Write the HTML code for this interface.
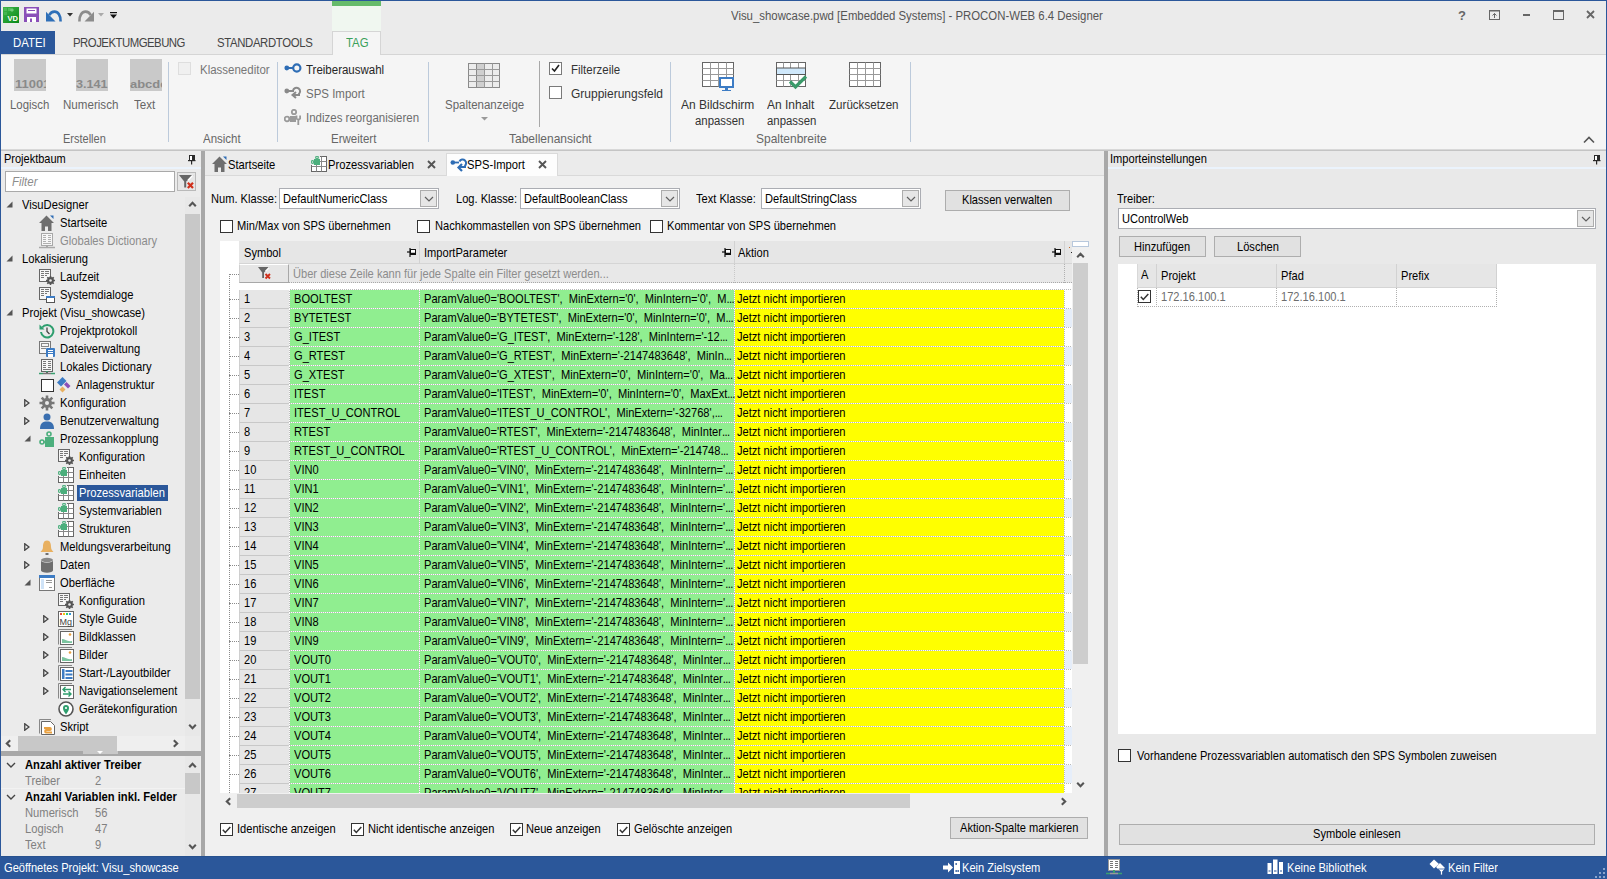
<!DOCTYPE html>
<html><head><meta charset="utf-8">
<style>
*{margin:0;padding:0;box-sizing:border-box}
html,body{width:1607px;height:879px;overflow:hidden;background:#ebebeb;font-family:"Liberation Sans",sans-serif;font-size:11.88px;color:#000}
.a{position:absolute}
.t{position:absolute;white-space:nowrap;line-height:1;transform:scaleX(0.9259);transform-origin:0 0}
#win{position:absolute;left:0;top:0;width:1607px;height:879px;border:1px solid #2b579a;border-bottom:none}
</style></head><body>
<!-- title bar -->
<div class="a" style="left:0;top:0;width:1607px;height:30px;background:#ebebeb"></div>
<!-- tab row -->
<div class="a" style="left:1px;top:31px;width:54px;height:24px;background:#2b579a"></div>
<!-- ribbon -->
<div class="a" style="left:1px;top:54px;width:1605px;height:97px;background:#f5f5f5;border-top:1px solid #d5d5d5;border-bottom:1px solid #c4c4c4"></div>
<div class="a" style="left:1px;top:149px;width:1605px;height:1px;background:#d8d8d8"></div>
<!-- main area -->
<div class="a" style="left:1px;top:151px;width:1605px;height:705px;background:#ebebeb"></div>
<!-- left panel -->
<div class="a" id="left" style="left:1px;top:151px;width:200px;height:705px;background:#ebebeb"></div>
<div class="a" style="left:201px;top:151px;width:4px;height:705px;background:#a8a8a8"></div>
<!-- doc -->
<div class="a" id="doc" style="left:205px;top:151px;width:899px;height:705px;background:#f0f0f0"></div>
<div class="a" style="left:1104px;top:151px;width:4px;height:705px;background:#a8a8a8"></div>
<!-- right -->
<div class="a" id="right" style="left:1108px;top:151px;width:498px;height:705px;background:#e9e9e9"></div>

<!-- TITLEBAR -->
<div class="a" style="left:332px;top:1px;width:49px;height:5px;background:#66bb6a"></div>
<div class="a" style="left:332px;top:6px;width:49px;height:25px;background:#f0f7f0"></div>
<svg class="a" style="left:3px;top:7px" width="16" height="16" viewBox="0 0 16 16">
 <defs><linearGradient id="gvd" x1="0" y1="0" x2="1" y2="1"><stop offset="0" stop-color="#3fb54a"/><stop offset="1" stop-color="#0a8a1a"/></linearGradient></defs>
 <rect width="16" height="16" fill="url(#gvd)"/>
 <rect x="1" y="1" width="3" height="3" fill="#5cc266" opacity=".6"/><rect x="1" y="5" width="3" height="3" fill="#5cc266" opacity=".5"/><rect x="5" y="1" width="3" height="3" fill="#6fcf77" opacity=".5"/>
 <path d="M9 1 l2 2 -2 2 -2 -2z" fill="#8fdc95" opacity=".7"/>
 <text x="4.5" y="14" font-family="Liberation Sans" font-weight="bold" font-size="7.5" fill="#fff">VD</text>
</svg>
<svg class="a" style="left:24px;top:7px" width="15" height="15" viewBox="0 0 15 15">
 <path d="M0 0H15V15H0Z" fill="#8a4fb8"/>
 <rect x="2.5" y="1.5" width="10" height="5" fill="#fff"/><rect x="4" y="3" width="7" height="1" fill="#8a4fb8"/>
 <rect x="3" y="10" width="9" height="5" fill="#fff"/><rect x="6" y="11.5" width="2" height="3.5" fill="#8a4fb8"/>
</svg>
<svg class="a" style="left:45px;top:10px" width="18" height="12" viewBox="0 0 18 12"><path d="M15.6 11.5C15.8 5.5 13 1.6 9.5 1.6C7 1.6 5.3 3 4.2 5.2" fill="none" stroke="#2e6fb8" stroke-width="2.6"/><path d="M1 1.8V11.5H10.5Z" fill="#2e6fb8"/></svg>
<svg class="a" style="left:67px;top:13px" width="6" height="4"><path d="M0 0H6L3 3.5Z" fill="#333"/></svg>
<svg class="a" style="left:77px;top:10px" width="18" height="12" viewBox="0 0 18 12"><path d="M2.4 11.5C2.2 5.5 5 1.6 8.5 1.6C11 1.6 12.7 3 13.8 5.2" fill="none" stroke="#8c8c8c" stroke-width="2.6"/><path d="M17 1.8V11.5H7.5Z" fill="#8c8c8c"/></svg>
<svg class="a" style="left:98px;top:13px" width="6" height="4"><path d="M0 0H6L3 3.5Z" fill="#aaa"/></svg>
<svg class="a" style="left:110px;top:12px" width="7" height="7"><rect x="0" y="0" width="7" height="1.2" fill="#111"/><path d="M0 2.5H7L3.5 6.5Z" fill="#111"/></svg>
<div class="t" style="left:731px;top:10px;font-size:12.31px;color:#555">Visu_showcase.pwd [Embedded Systems] - PROCON-WEB 6.4 Designer</div>
<svg class="a" style="left:1456px;top:8px" width="150" height="14">
 <text x="2" y="11.5" font-family="Liberation Sans" font-weight="bold" font-size="13" fill="#666">?</text>
 <rect x="33.5" y="2.5" width="10" height="9" fill="none" stroke="#666"/><rect x="33" y="2" width="11" height="1.5" fill="#666"/>
 <path d="M38.5 10V5.5M36.5 7.5L38.5 5.5L40.5 7.5" stroke="#666" fill="none"/>
 <rect x="67" y="6" width="7" height="2" fill="#666"/>
 <rect x="97.5" y="2.5" width="10" height="9" fill="none" stroke="#666"/><rect x="97" y="2" width="11" height="2" fill="#666"/>
 <path d="M131 3L138 10M138 3L131 10" stroke="#666" stroke-width="1.8"/>
</svg>
<!-- TABS ROW -->
<div class="t" style="left:13px;top:37px;font-size:12.31px;color:#fff">DATEI</div>
<div class="t" style="left:73px;top:37px;font-size:12.31px;color:#444;letter-spacing:-0.55px">PROJEKTUMGEBUNG</div>
<div class="t" style="left:217px;top:37px;font-size:12.31px;color:#444;letter-spacing:-0.4px">STANDARDTOOLS</div>
<div class="a" style="left:332px;top:31px;width:49px;height:24px;background:#f5f5f5;border:1px solid #d5d5d5;border-bottom:none"></div>
<div class="t" style="left:346px;top:37px;font-size:12.31px;color:#3aa05a">TAG</div>


<!-- RIBBON -->
<div class="a" style="left:14px;top:59px;width:32px;height:32px;background:#c9c9c9;overflow:hidden"><div class="t" style="left:1px;top:20px;font-size:10.80px;font-weight:bold;color:#8a8a8a;transform:scaleX(1.2)">11001</div></div>
<div class="a" style="left:76px;top:59px;width:32px;height:32px;background:#c9c9c9;overflow:hidden"><div class="t" style="left:0px;top:20px;font-size:10.80px;font-weight:bold;color:#8a8a8a;transform:scaleX(1.17)">3.141</div></div>
<div class="a" style="left:130px;top:59px;width:32px;height:32px;background:#c9c9c9;overflow:hidden"><div class="t" style="left:0px;top:20px;font-size:10.80px;font-weight:bold;color:#8a8a8a;transform:scaleX(1.2)">abcde</div></div>
<div class="t" style="left:10px;top:99px;font-size:12.31px;color:#666">Logisch</div>
<div class="t" style="left:63px;top:99px;font-size:12.53px;color:#666">Numerisch</div>
<div class="t" style="left:134px;top:99px;font-size:12.53px;color:#666">Text</div>
<div class="t" style="left:63px;top:134px;font-size:11.88px;color:#666">Erstellen</div>
<div class="a" style="left:168px;top:62px;width:1px;height:80px;background:#bccadb"></div>
<div class="a" style="left:178px;top:62px;width:13px;height:13px;background:#f0f0f0;border:1px solid #dedede"></div>
<div class="t" style="left:200px;top:64px;font-size:12.42px;color:#777">Klasseneditor</div>
<div class="t" style="left:203px;top:133px;font-size:12.42px;color:#666">Ansicht</div>
<div class="a" style="left:277px;top:62px;width:1px;height:80px;background:#bccadb"></div>
<svg class="a" style="left:284px;top:63px" width="18" height="12" viewBox="0 0 18 12"><circle cx="2.8" cy="5" r="2.4" fill="#2e6db5"/><rect x="3" y="4" width="7" height="2" fill="#2e6db5"/><circle cx="12.8" cy="5" r="3.6" fill="none" stroke="#2e6db5" stroke-width="2.2"/></svg>
<div class="t" style="left:306px;top:64px;font-size:12.42px;color:#262626">Treiberauswahl</div>
<svg class="a" style="left:284px;top:86px" width="18" height="14" viewBox="0 0 18 14"><circle cx="2.8" cy="5" r="2.4" fill="#8a8a8a"/><rect x="3" y="4" width="7" height="2" fill="#8a8a8a"/><path d="M9 4.5 A3.6 3.6 0 1 1 14.5 8.3" fill="none" stroke="#8a8a8a" stroke-width="2"/><path d="M16 9H9M12 6L8.5 9L12 12" fill="none" stroke="#8a8a8a" stroke-width="2"/></svg>
<div class="t" style="left:306px;top:88px;font-size:12.42px;color:#6d6d6d">SPS Import</div>
<svg class="a" style="left:284px;top:109px" width="18" height="16" viewBox="0 0 18 16"><circle cx="3" cy="10" r="2.3" fill="none" stroke="#9a9a9a" stroke-width="1.8"/><circle cx="10" cy="3" r="2.2" fill="none" stroke="#9a9a9a" stroke-width="1.8"/><rect x="6" y="7" width="6" height="6" fill="#9a9a9a"/><path d="M12.5 6.5v3l1.8 1.5 1.8-1.5v-3M14.3 11v5" fill="none" stroke="#9a9a9a" stroke-width="1.8"/></svg>
<div class="t" style="left:306px;top:112px;font-size:12.42px;color:#6d6d6d">Indizes reorganisieren</div>
<div class="t" style="left:331px;top:133px;font-size:12.42px;color:#666">Erweitert</div>
<div class="a" style="left:428px;top:62px;width:1px;height:80px;background:#bccadb"></div>
<svg class="a" style="left:468px;top:63px" width="32" height="25" viewBox="0 0 32 25"><rect x="0.5" y="0.5" width="31" height="24" fill="#ececec" stroke="#8a8a8a"/><rect x="8.5" y="0.5" width="8" height="24" fill="#cfcfcf" stroke="#8a8a8a"/><path d="M16.5 0.5v24M24.5 0.5v24M0.5 6.5h31M0.5 12.5h31M0.5 18.5h31" stroke="#9a9a9a" fill="none"/></svg>
<div class="t" style="left:445px;top:99px;font-size:12.42px;color:#666">Spaltenanzeige</div>
<svg class="a" style="left:481px;top:117px" width="8" height="4"><path d="M0 0H7L3.5 3.5Z" fill="#999"/></svg>
<div class="a" style="left:539px;top:61px;width:1px;height:66px;background:#a8a8a8"></div>
<div class="a" style="left:549px;top:62px;width:13px;height:13px;background:#fff;border:1px solid #7a7a7a"></div>
<svg class="a" style="left:551px;top:64px" width="9" height="9"><path d="M1 4.5L3.5 7L8 1" fill="none" stroke="#222" stroke-width="1.6"/></svg>
<div class="t" style="left:571px;top:64px;font-size:12.42px;color:#333">Filterzeile</div>
<div class="a" style="left:549px;top:86px;width:13px;height:13px;background:#fff;border:1px solid #7a7a7a"></div>
<div class="t" style="left:571px;top:88px;font-size:12.96px;color:#333">Gruppierungsfeld</div>
<div class="t" style="left:509px;top:133px;font-size:12.96px;color:#666">Tabellenansicht</div>
<div class="a" style="left:670px;top:62px;width:1px;height:80px;background:#bccadb"></div>
<svg class="a" style="left:702px;top:62px" width="33" height="30" viewBox="0 0 33 30"><rect x="0.5" y="0.5" width="31" height="24" fill="#fff" stroke="#666"/><path d="M8.5 0.5v24M16.5 0.5v24M24.5 0.5v24M0.5 6.5h31M0.5 12.5h31M0.5 18.5h31" stroke="#999" fill="none"/><rect x="17" y="15" width="15" height="11" fill="#3d7cc4"/><rect x="19" y="17" width="11" height="7" fill="#fff"/><rect x="23" y="26" width="3" height="2" fill="#3d7cc4"/><rect x="20" y="28" width="9" height="1" fill="#3d7cc4"/></svg>
<svg class="a" style="left:776px;top:62px" width="32" height="29" viewBox="0 0 32 29"><rect x="0.5" y="0.5" width="29" height="24" fill="#fff" stroke="#666"/><path d="M7.5 0.5v24M14.5 0.5v24M22.5 0.5v24M0.5 6.5h29M0.5 12.5h29M0.5 18.5h29" stroke="#999" fill="none"/><rect x="0.5" y="6" width="29" height="6.5" fill="#cfe8fb" stroke="#555"/><path d="M14 19.5L19.5 25L30 14.5" fill="none" stroke="#3a9a6a" stroke-width="3.2"/></svg>
<svg class="a" style="left:849px;top:62px" width="33" height="25" viewBox="0 0 33 25"><rect x="0.5" y="0.5" width="31" height="24" fill="#fff" stroke="#666"/><path d="M8.5 0.5v24M16.5 0.5v24M24.5 0.5v24M0.5 6.5h31M0.5 12.5h31M0.5 18.5h31" stroke="#999" fill="none"/></svg>
<div class="t" style="left:681px;top:99px;font-size:12.96px;color:#333">An Bildschirm</div>
<div class="t" style="left:695px;top:115px;font-size:12.31px;color:#333">anpassen</div>
<div class="t" style="left:767px;top:99px;font-size:12.96px;color:#333">An Inhalt</div>
<div class="t" style="left:767px;top:115px;font-size:12.31px;color:#333">anpassen</div>
<div class="t" style="left:829px;top:99px;font-size:12.53px;color:#333">Zurücksetzen</div>
<div class="t" style="left:756px;top:133px;font-size:12.96px;color:#666">Spaltenbreite</div>
<div class="a" style="left:910px;top:62px;width:1px;height:80px;background:#bccadb"></div>
<svg class="a" style="left:1583px;top:136px" width="12" height="8"><path d="M1 6.5L6 1.5L11 6.5" fill="none" stroke="#555" stroke-width="1.6"/></svg>


<!-- LEFT PANEL -->
<div class="t" style="left:4px;top:154px;font-size:11.88px;color:#000">Projektbaum</div>
<svg class="a" style="left:188px;top:154px" width="8" height="11" viewBox="0 0 8 11"><rect x="1.5" y="1.5" width="5" height="5" fill="#fff" stroke="#2a2a2a"/><rect x="4" y="1" width="3" height="6" fill="#2a2a2a"/><rect x="0" y="6" width="7.5" height="1.2" fill="#2a2a2a"/><rect x="3" y="7" width="1.2" height="3.5" fill="#2a2a2a"/></svg>
<div class="a" style="left:1px;top:167px;width:200px;height:2px;background:#ebf3fc"></div>
<div class="a" style="left:5px;top:171px;width:170px;height:21px;background:#fff;border:1px solid #a9a9a9"></div>
<div class="t" style="left:12px;top:176px;font-size:12.42px;color:#8c8c8c;font-style:italic">Filter</div>
<div class="a" style="left:177px;top:172px;width:19px;height:19px;background:#e6e6e6;border:1px solid #b9b9b9"></div>
<svg class="a" style="left:178px;top:174px" width="17" height="16" viewBox="0 0 17 16"><path d="M1 1H15.5L8.2 7.5V13.5H6.2V7.5Z" fill="#666"/><path d="M14.8 1.2L10 6.2" stroke="#fff" stroke-width="1.5"/><path d="M9.8 8.8L15 14M15 8.8L9.8 14" stroke="#d0301c" stroke-width="2.2"/></svg>
<div class="a" style="left:185px;top:197px;width:15px;height:539px;background:#e8e8e8"></div>
<svg class="a" style="left:188px;top:201px" width="10" height="7" viewBox="0 0 10 7"><path d="M1.2 5.2L4.5 1.8L7.8 5.2" fill="none" stroke="#555" stroke-width="2.1"/></svg>
<div class="a" style="left:185px;top:214px;width:15px;height:485px;background:#c8c8c8"></div>
<svg class="a" style="left:188px;top:723px" width="10" height="7" viewBox="0 0 10 7"><path d="M1.2 1.8L4.5 5.2L7.8 1.8" fill="none" stroke="#555" stroke-width="2.1"/></svg>
<svg class="a" style="left:6px;top:201px" width="7" height="7" viewBox="0 0 7 7"><path d="M6.5 0.5V6.5H0.5Z" fill="#555"/></svg>
<div class="t" style="left:22px;top:199px;font-size:12.10px;color:#000">VisuDesigner</div>
<svg class="a" style="left:39px;top:215px" width="16" height="16" viewBox="0 0 16 16"><path d="M7.5 0.5L15 8H12.5V16H9V11.5H6V16H2.5V8H0Z" fill="#6e6e6e"/><path d="M11 0.5h3.5v3.5z" fill="#2e6db5"/></svg>
<div class="t" style="left:60px;top:217px;font-size:12.10px;color:#000">Startseite</div>
<svg class="a" style="left:39px;top:233px" width="16" height="16" viewBox="0 0 16 16"><rect x="2.5" y="0.5" width="11" height="12" fill="#f6f6f6" stroke="#a8a8a8"/><path d="M4 2.5h3M9 2.5h3M4 4.5h3M9 4.5h3M4 6.5h3M9 6.5h3M4 8.5h3M9 8.5h3M4 10.5h8" stroke="#b0b0b0"/><path d="M0 14.5h16" stroke="#a8a8a8" stroke-width="1.5"/><rect x="7" y="12" width="2" height="2" fill="#a8a8a8"/></svg>
<div class="t" style="left:60px;top:235px;font-size:12.10px;color:#8c8c8c">Globales Dictionary</div>
<svg class="a" style="left:6px;top:255px" width="7" height="7" viewBox="0 0 7 7"><path d="M6.5 0.5V6.5H0.5Z" fill="#555"/></svg>
<div class="t" style="left:22px;top:253px;font-size:12.10px;color:#000">Lokalisierung</div>
<svg class="a" style="left:39px;top:269px" width="16" height="16" viewBox="0 0 16 16"><rect x="0.5" y="0.5" width="11" height="12" fill="#f6f6f6" stroke="#666"/><path d="M2 2.5h3M6 2.5h4M2 4.5h3M6 4.5h4M2 6.5h3M6 6.5h2M2 8.5h3" stroke="#777"/><circle cx="11.5" cy="11.5" r="3.4" fill="#555"/><path d="M11.5 7v9M7 11.5h9M8.3 8.3l6.4 6.4M14.7 8.3l-6.4 6.4" stroke="#555" stroke-width="1.6"/><circle cx="11.5" cy="11.5" r="1.3" fill="#ebebeb"/></svg>
<div class="t" style="left:60px;top:271px;font-size:12.10px;color:#000">Laufzeit</div>
<svg class="a" style="left:39px;top:287px" width="16" height="16" viewBox="0 0 16 16"><rect x="0.5" y="0.5" width="11" height="12" fill="#f6f6f6" stroke="#666"/><path d="M2 2.5h3M6 2.5h4M2 4.5h3M6 4.5h4M2 6.5h3M6 6.5h2M2 8.5h3" stroke="#777"/><rect x="7.5" y="9.5" width="8" height="6" fill="#fff" stroke="#555"/><rect x="7" y="9" width="9" height="2" fill="#3d7cc4"/></svg>
<div class="t" style="left:60px;top:289px;font-size:12.10px;color:#000">Systemdialoge</div>
<svg class="a" style="left:6px;top:309px" width="7" height="7" viewBox="0 0 7 7"><path d="M6.5 0.5V6.5H0.5Z" fill="#555"/></svg>
<div class="t" style="left:22px;top:307px;font-size:12.10px;color:#000">Projekt (Visu_showcase)</div>
<svg class="a" style="left:39px;top:323px" width="16" height="16" viewBox="0 0 16 16"><path d="M3.2 4.5A6.2 6.2 0 1 1 2 9" fill="none" stroke="#2e9e6e" stroke-width="2"/><path d="M0.5 1.5v5h5z" fill="#2e9e6e"/><path d="M8 4.5v4l2.5 2.5" fill="none" stroke="#444" stroke-width="1.3"/></svg>
<div class="t" style="left:60px;top:325px;font-size:12.10px;color:#000">Projektprotokoll</div>
<svg class="a" style="left:39px;top:341px" width="16" height="16" viewBox="0 0 16 16"><rect x="0.5" y="0.5" width="11" height="12" fill="#f6f6f6" stroke="#777"/><rect x="2.5" y="2.5" width="7" height="3" fill="none" stroke="#888"/><path d="M2 7.5h5" stroke="#888"/><rect x="7" y="7" width="9" height="9" rx="1" fill="#3d7cc4"/><path d="M9 9.5h5M9 11.5h5" stroke="#fff"/><rect x="9" y="13" width="5" height="3" fill="#fff"/></svg>
<div class="t" style="left:60px;top:343px;font-size:12.10px;color:#000">Dateiverwaltung</div>
<svg class="a" style="left:39px;top:359px" width="16" height="16" viewBox="0 0 16 16"><rect x="2.5" y="0.5" width="11" height="12" fill="#f6f6f6" stroke="#666"/><path d="M4 2.5h3M9 2.5h3M4 4.5h3M9 4.5h3M4 6.5h3M9 6.5h3M4 8.5h3M9 8.5h3M4 10.5h8" stroke="#777"/><path d="M0 14.5h4M12 14.5h4" stroke="#3aa070" stroke-width="1.5"/><path d="M4 14.5h8" stroke="#777" stroke-width="1.5"/><rect x="7" y="12" width="2" height="2" fill="#666"/><rect x="7" y="12" width="2" height="1" fill="#3aa070"/></svg>
<div class="t" style="left:60px;top:361px;font-size:12.10px;color:#000">Lokales Dictionary</div>
<div class="a" style="left:41px;top:379px;width:13px;height:13px;background:#fff;border:1px solid #333"></div>
<svg class="a" style="left:56px;top:377px" width="16" height="16" viewBox="0 0 16 16"><path d="M6.5 0L10.5 4L5 9.5L1 5.5Z" fill="#3d7cc4"/><path d="M10.5 5L14.5 9L12 11.5L8 7.5Z" fill="#8a4fb8"/><path d="M6.5 9.5L9.5 12.5L6.5 15.5L3.5 12.5Z" fill="#e8b060"/></svg>
<div class="t" style="left:76px;top:379px;font-size:12.10px;color:#000">Anlagenstruktur</div>
<svg class="a" style="left:24px;top:399px" width="6" height="8" viewBox="0 0 6 8"><path d="M0.75 0.75L5 4L0.75 7.25Z" fill="none" stroke="#444" stroke-width="1.3"/></svg>
<svg class="a" style="left:39px;top:395px" width="16" height="16" viewBox="0 0 16 16"><circle cx="8" cy="8" r="5" fill="#777"/><circle cx="8" cy="8" r="2" fill="#ebebeb"/><path d="M8 0.5v15M0.5 8h15M2.7 2.7l10.6 10.6M13.3 2.7L2.7 13.3" stroke="#777" stroke-width="2.6"/><circle cx="8" cy="8" r="2" fill="#ebebeb"/></svg>
<div class="t" style="left:60px;top:397px;font-size:12.10px;color:#000">Konfiguration</div>
<svg class="a" style="left:24px;top:417px" width="6" height="8" viewBox="0 0 6 8"><path d="M0.75 0.75L5 4L0.75 7.25Z" fill="none" stroke="#444" stroke-width="1.3"/></svg>
<svg class="a" style="left:39px;top:413px" width="16" height="16" viewBox="0 0 16 16"><circle cx="8" cy="4" r="3.5" fill="#3a6fb0"/><path d="M1 16C1 10 4 8.5 8 8.5S15 10 15 16Z" fill="#3a6fb0"/></svg>
<div class="t" style="left:60px;top:415px;font-size:12.10px;color:#000">Benutzerverwaltung</div>
<svg class="a" style="left:24px;top:435px" width="7" height="7" viewBox="0 0 7 7"><path d="M6.5 0.5V6.5H0.5Z" fill="#555"/></svg>
<svg class="a" style="left:39px;top:431px" width="16" height="16" viewBox="0 0 16 16"><rect x="6" y="6" width="9" height="10" fill="#4caf7d"/><circle cx="10" cy="3" r="2" fill="none" stroke="#4caf7d" stroke-width="1.6"/><circle cx="3" cy="11" r="2" fill="none" stroke="#4caf7d" stroke-width="1.6"/><path d="M4.5 11H6" stroke="#4caf7d" stroke-width="1.6"/></svg>
<div class="t" style="left:60px;top:433px;font-size:12.10px;color:#000">Prozessankopplung</div>
<svg class="a" style="left:58px;top:449px" width="16" height="16" viewBox="0 0 16 16"><rect x="0.5" y="0.5" width="11" height="12" fill="#f6f6f6" stroke="#666"/><path d="M2 2.5h3M6 2.5h4M2 4.5h3M6 4.5h4M2 6.5h3M6 6.5h2M2 8.5h3" stroke="#777"/><circle cx="11.5" cy="11.5" r="3.4" fill="#555"/><path d="M11.5 7v9M7 11.5h9M8.3 8.3l6.4 6.4M14.7 8.3l-6.4 6.4" stroke="#555" stroke-width="1.6"/><circle cx="11.5" cy="11.5" r="1.3" fill="#ebebeb"/></svg>
<div class="t" style="left:79px;top:451px;font-size:12.10px;color:#000">Konfiguration</div>
<svg class="a" style="left:58px;top:467px" width="16" height="16" viewBox="0 0 16 16"><rect x="0.5" y="0.5" width="15" height="15" fill="#fff" stroke="#666"/><path d="M5.5 0.5v15M10.5 0.5v15M0.5 5.5h15M0.5 10.5h15" stroke="#888"/><rect x="0" y="0" width="9" height="9" fill="#ebebeb"/><rect x="3" y="3" width="6" height="6" fill="#4caf7d"/><circle cx="6" cy="1.5" r="1.3" fill="none" stroke="#4caf7d" stroke-width="1.2"/><circle cx="1.5" cy="6" r="1.3" fill="none" stroke="#4caf7d" stroke-width="1.2"/></svg>
<div class="t" style="left:79px;top:469px;font-size:12.10px;color:#000">Einheiten</div>
<svg class="a" style="left:58px;top:485px" width="16" height="16" viewBox="0 0 16 16"><rect x="0.5" y="0.5" width="15" height="15" fill="#fff" stroke="#666"/><path d="M5.5 0.5v15M10.5 0.5v15M0.5 5.5h15M0.5 10.5h15" stroke="#888"/><rect x="0" y="0" width="9" height="9" fill="#ebebeb"/><rect x="3" y="3" width="6" height="6" fill="#4caf7d"/><circle cx="6" cy="1.5" r="1.3" fill="none" stroke="#4caf7d" stroke-width="1.2"/><circle cx="1.5" cy="6" r="1.3" fill="none" stroke="#4caf7d" stroke-width="1.2"/></svg>
<div class="a" style="left:77px;top:485px;width:91px;height:16px;background:#2b579a"></div>
<div class="t" style="left:79px;top:487px;font-size:12.10px;color:#fff">Prozessvariablen</div>
<svg class="a" style="left:58px;top:503px" width="16" height="16" viewBox="0 0 16 16"><rect x="0.5" y="0.5" width="15" height="15" fill="#fff" stroke="#666"/><path d="M5.5 0.5v15M10.5 0.5v15M0.5 5.5h15M0.5 10.5h15" stroke="#888"/><rect x="0" y="0" width="9" height="9" fill="#ebebeb"/><rect x="3" y="3" width="6" height="6" fill="#4caf7d"/><circle cx="6" cy="1.5" r="1.3" fill="none" stroke="#4caf7d" stroke-width="1.2"/><circle cx="1.5" cy="6" r="1.3" fill="none" stroke="#4caf7d" stroke-width="1.2"/></svg>
<div class="t" style="left:79px;top:505px;font-size:12.10px;color:#000">Systemvariablen</div>
<svg class="a" style="left:58px;top:521px" width="16" height="16" viewBox="0 0 16 16"><rect x="0.5" y="0.5" width="15" height="15" fill="#fff" stroke="#666"/><path d="M5.5 0.5v15M10.5 0.5v15M0.5 5.5h15M0.5 10.5h15" stroke="#888"/><rect x="0" y="0" width="9" height="9" fill="#ebebeb"/><rect x="3" y="3" width="6" height="6" fill="#4caf7d"/><circle cx="6" cy="1.5" r="1.3" fill="none" stroke="#4caf7d" stroke-width="1.2"/><circle cx="1.5" cy="6" r="1.3" fill="none" stroke="#4caf7d" stroke-width="1.2"/></svg>
<div class="t" style="left:79px;top:523px;font-size:12.10px;color:#000">Strukturen</div>
<svg class="a" style="left:24px;top:543px" width="6" height="8" viewBox="0 0 6 8"><path d="M0.75 0.75L5 4L0.75 7.25Z" fill="none" stroke="#444" stroke-width="1.3"/></svg>
<svg class="a" style="left:39px;top:539px" width="16" height="16" viewBox="0 0 16 16"><path d="M8 1.5C4.5 1.5 4 5 4 8S2 12 1.5 13H14.5C14 12 12 11 12 8S11.5 1.5 8 1.5Z" fill="#e8b060"/><ellipse cx="8" cy="15" rx="1.8" ry="1" fill="#666"/></svg>
<div class="t" style="left:60px;top:541px;font-size:12.10px;color:#000">Meldungsverarbeitung</div>
<svg class="a" style="left:24px;top:561px" width="6" height="8" viewBox="0 0 6 8"><path d="M0.75 0.75L5 4L0.75 7.25Z" fill="none" stroke="#444" stroke-width="1.3"/></svg>
<svg class="a" style="left:39px;top:557px" width="16" height="16" viewBox="0 0 16 16"><ellipse cx="8" cy="3" rx="6" ry="2.2" fill="#888"/><path d="M2 3.5V13.5A6 2.2 0 0 0 14 13.5V3.5A6 2.2 0 0 1 2 3.5Z" fill="#6e6e6e"/></svg>
<div class="t" style="left:60px;top:559px;font-size:12.10px;color:#000">Daten</div>
<svg class="a" style="left:24px;top:579px" width="7" height="7" viewBox="0 0 7 7"><path d="M6.5 0.5V6.5H0.5Z" fill="#555"/></svg>
<svg class="a" style="left:39px;top:575px" width="16" height="16" viewBox="0 0 16 16"><rect x="0.5" y="0.5" width="15" height="15" fill="#fff" stroke="#777"/><rect x="0" y="0" width="16" height="3" fill="#3d7cc4"/><rect x="2" y="4" width="3" height="10" fill="#cfe3f7"/><path d="M7 5.5h6M7 7.5h6M10 12.5h3" stroke="#999"/></svg>
<div class="t" style="left:60px;top:577px;font-size:12.10px;color:#000">Oberfläche</div>
<svg class="a" style="left:58px;top:593px" width="16" height="16" viewBox="0 0 16 16"><rect x="0.5" y="0.5" width="11" height="12" fill="#f6f6f6" stroke="#666"/><path d="M2 2.5h3M6 2.5h4M2 4.5h3M6 4.5h4M2 6.5h3M6 6.5h2M2 8.5h3" stroke="#777"/><circle cx="11.5" cy="11.5" r="3.4" fill="#555"/><path d="M11.5 7v9M7 11.5h9M8.3 8.3l6.4 6.4M14.7 8.3l-6.4 6.4" stroke="#555" stroke-width="1.6"/><circle cx="11.5" cy="11.5" r="1.3" fill="#ebebeb"/></svg>
<div class="t" style="left:79px;top:595px;font-size:12.10px;color:#000">Konfiguration</div>
<svg class="a" style="left:43px;top:615px" width="6" height="8" viewBox="0 0 6 8"><path d="M0.75 0.75L5 4L0.75 7.25Z" fill="none" stroke="#444" stroke-width="1.3"/></svg>
<svg class="a" style="left:58px;top:611px" width="16" height="16" viewBox="0 0 16 16"><rect x="0.5" y="0.5" width="15" height="15" fill="#fff" stroke="#666"/><rect x="2" y="2" width="2" height="2" fill="#e84c3d"/><rect x="5" y="2" width="2" height="2" fill="#f1c40f"/><rect x="8" y="2" width="2" height="2" fill="#2ecc71"/><rect x="11" y="2" width="2" height="2" fill="#3498db"/><text x="1.5" y="13.5" font-family="Liberation Sans" font-size="9" fill="#444">Mg</text></svg>
<div class="t" style="left:79px;top:613px;font-size:12.10px;color:#000">Style Guide</div>
<svg class="a" style="left:43px;top:633px" width="6" height="8" viewBox="0 0 6 8"><path d="M0.75 0.75L5 4L0.75 7.25Z" fill="none" stroke="#444" stroke-width="1.3"/></svg>
<svg class="a" style="left:58px;top:629px" width="16" height="16" viewBox="0 0 16 16"><path d="M0.5 15.5V0.5H14" fill="none" stroke="#888"/><rect x="2.5" y="2.5" width="13" height="13" fill="#fff" stroke="#666"/><circle cx="12" cy="5.5" r="1.3" fill="#e8a040"/><path d="M4 14V10C7 10 9 13 14 12V14Z" fill="#7cc4a0"/></svg>
<div class="t" style="left:79px;top:631px;font-size:12.10px;color:#000">Bildklassen</div>
<svg class="a" style="left:43px;top:651px" width="6" height="8" viewBox="0 0 6 8"><path d="M0.75 0.75L5 4L0.75 7.25Z" fill="none" stroke="#444" stroke-width="1.3"/></svg>
<svg class="a" style="left:58px;top:647px" width="16" height="16" viewBox="0 0 16 16"><path d="M0.5 15.5V0.5H14" fill="none" stroke="#888"/><rect x="2.5" y="2.5" width="13" height="13" fill="#fff" stroke="#666"/><circle cx="12" cy="5.5" r="1.3" fill="#e8a040"/><path d="M4 14V10C7 10 9 13 14 12V14Z" fill="#7cc4a0"/></svg>
<div class="t" style="left:79px;top:649px;font-size:12.10px;color:#000">Bilder</div>
<svg class="a" style="left:43px;top:669px" width="6" height="8" viewBox="0 0 6 8"><path d="M0.75 0.75L5 4L0.75 7.25Z" fill="none" stroke="#444" stroke-width="1.3"/></svg>
<svg class="a" style="left:58px;top:665px" width="16" height="16" viewBox="0 0 16 16"><path d="M0.5 15.5V0.5H14" fill="none" stroke="#888"/><rect x="2.5" y="2.5" width="13" height="13" fill="#fff" stroke="#666"/><rect x="4" y="4" width="2.5" height="10" fill="#3d7cc4"/><rect x="7.5" y="5" width="7" height="2" fill="#3d7cc4"/><rect x="7.5" y="8.5" width="7" height="2" fill="#3d7cc4"/><rect x="7.5" y="12" width="7" height="2" fill="#3d7cc4"/></svg>
<div class="t" style="left:79px;top:667px;font-size:12.10px;color:#000">Start-/Layoutbilder</div>
<svg class="a" style="left:43px;top:687px" width="6" height="8" viewBox="0 0 6 8"><path d="M0.75 0.75L5 4L0.75 7.25Z" fill="none" stroke="#444" stroke-width="1.3"/></svg>
<svg class="a" style="left:58px;top:683px" width="16" height="16" viewBox="0 0 16 16"><path d="M0.5 15.5V0.5H14" fill="none" stroke="#888"/><rect x="2.5" y="2.5" width="13" height="13" fill="#fff" stroke="#666"/><path d="M13 6.5H5M7.5 4L5 6.5L7.5 9M5 11H13M10.5 8.5L13 11L10.5 13.5" fill="none" stroke="#2e9e6e" stroke-width="1.4"/></svg>
<div class="t" style="left:79px;top:685px;font-size:12.10px;color:#000">Navigationselement</div>
<svg class="a" style="left:58px;top:701px" width="16" height="16" viewBox="0 0 16 16"><circle cx="8" cy="8" r="7" fill="#fff" stroke="#555" stroke-width="1.6"/><path d="M8 13.5C6 10.5 5 9 5 7A3 3 0 0 1 11 7C11 9 10 10.5 8 13.5Z" fill="#2e9e6e"/><circle cx="8" cy="7" r="1.1" fill="#fff"/></svg>
<div class="t" style="left:79px;top:703px;font-size:12.10px;color:#000">Gerätekonfiguration</div>
<svg class="a" style="left:24px;top:723px" width="6" height="8" viewBox="0 0 6 8"><path d="M0.75 0.75L5 4L0.75 7.25Z" fill="none" stroke="#444" stroke-width="1.3"/></svg>
<svg class="a" style="left:39px;top:719px" width="16" height="16" viewBox="0 0 16 16"><path d="M0.5 14.5V0.5H12" fill="none" stroke="#888"/><path d="M2.5 2.5H11.5L15.5 6.5V15.5H2.5Z" fill="#fff" stroke="#666"/><path d="M5 9H11C12 9 12 11 11 11H7C6 11 6 13.5 7 13.5H13" fill="none" stroke="#e8a040" stroke-width="2.2"/></svg>
<div class="t" style="left:60px;top:721px;font-size:12.10px;color:#000">Skript</div>
<div class="a" style="left:1px;top:736px;width:184px;height:15px;background:#efefef"></div>
<div class="a" style="left:185px;top:736px;width:16px;height:15px;background:#ebebeb"></div>
<svg class="a" style="left:5px;top:739px" width="7" height="10" viewBox="0 0 7 10"><path d="M5.2 1.2L1.8 4.5L5.2 7.8" fill="none" stroke="#555" stroke-width="2.1"/></svg>
<div class="a" style="left:18px;top:736px;width:99px;height:15px;background:#c8c8c8"></div>
<svg class="a" style="left:172px;top:739px" width="7" height="10" viewBox="0 0 7 10"><path d="M1.8 1.2L5.2 4.5L1.8 7.8" fill="none" stroke="#555" stroke-width="2.1"/></svg>
<div class="a" style="left:1px;top:751px;width:200px;height:5px;background:#a8a8a8"></div>
<div class="a" style="left:83px;top:751px;width:35px;height:3px;background:#c8c8c8"></div>
<svg class="a" style="left:97px;top:751px" width="6" height="4" viewBox="0 0 6 4"><path d="M0 0H6L3 3Z" fill="#fff"/></svg>
<div class="a" style="left:1px;top:756px;width:200px;height:100px;background:#ebebeb"></div>
<div class="a" style="left:1px;top:788px;width:184px;height:1px;background:#f2f2f2"></div>
<svg class="a" style="left:6px;top:762px" width="10" height="6" viewBox="0 0 10 6"><path d="M1 1L5 5L9 1" fill="none" stroke="#444" stroke-width="1.4"/></svg>
<div class="t" style="left:25px;top:759px;font-size:12.10px;font-weight:bold;color:#000">Anzahl aktiver Treiber</div>
<div class="t" style="left:25px;top:775px;font-size:12.10px;color:#808080">Treiber</div>
<div class="t" style="left:95px;top:775px;font-size:12.10px;color:#808080">2</div>
<svg class="a" style="left:6px;top:794px" width="10" height="6" viewBox="0 0 10 6"><path d="M1 1L5 5L9 1" fill="none" stroke="#444" stroke-width="1.4"/></svg>
<div class="t" style="left:25px;top:791px;font-size:12.10px;font-weight:bold;color:#000">Anzahl Variablen inkl. Felder</div>
<div class="t" style="left:25px;top:807px;font-size:12.10px;color:#808080">Numerisch</div>
<div class="t" style="left:95px;top:807px;font-size:12.10px;color:#808080">56</div>
<div class="t" style="left:25px;top:823px;font-size:12.10px;color:#808080">Logisch</div>
<div class="t" style="left:95px;top:823px;font-size:12.10px;color:#808080">47</div>
<div class="t" style="left:25px;top:839px;font-size:12.10px;color:#808080">Text</div>
<div class="t" style="left:95px;top:839px;font-size:12.10px;color:#808080">9</div>
<div class="a" style="left:185px;top:756px;width:15px;height:100px;background:#e8e8e8"></div>
<svg class="a" style="left:188px;top:762px" width="10" height="7" viewBox="0 0 10 7"><path d="M1.2 5.2L4.5 1.8L7.8 5.2" fill="none" stroke="#555" stroke-width="2.1"/></svg>
<div class="a" style="left:185px;top:773px;width:15px;height:21px;background:#c8c8c8"></div>
<svg class="a" style="left:188px;top:843px" width="10" height="7" viewBox="0 0 10 7"><path d="M1.2 1.8L4.5 5.2L7.8 1.8" fill="none" stroke="#555" stroke-width="2.1"/></svg>
<!-- DOC -->
<div class="a" style="left:205px;top:151px;width:899px;height:25px;background:#ebebeb;border-bottom:1px solid #d9d9d9"></div>
<div class="a" style="left:446px;top:153px;width:112px;height:23px;background:#fdfdfd;border:1px solid #dadada;border-bottom:none"></div>
<svg class="a" style="left:212px;top:156px" width="16" height="16" viewBox="0 0 16 16"><path d="M7.5 0.5L15 8H12.5V16H9V11.5H6V16H2.5V8H0Z" fill="#6e6e6e"/><path d="M11 0.5h3.5v3.5z" fill="#2e6db5"/></svg>
<div class="t" style="left:228px;top:159px;font-size:12.10px;color:#000;">Startseite</div>
<svg class="a" style="left:311px;top:156px" width="17" height="17" viewBox="0 0 17 17"><rect x="0.5" y="0.5" width="15" height="15" fill="#fff" stroke="#666"/><path d="M5.5 0.5v15M10.5 0.5v15M0.5 5.5h15M0.5 10.5h15" stroke="#888"/><rect x="0" y="0" width="9" height="9" fill="#ebebeb"/><rect x="3" y="3" width="6" height="6" fill="#4caf7d"/><circle cx="6" cy="1.5" r="1.3" fill="none" stroke="#4caf7d" stroke-width="1.2"/><circle cx="1.5" cy="6" r="1.3" fill="none" stroke="#4caf7d" stroke-width="1.2"/></svg>
<div class="t" style="left:328px;top:159px;font-size:12.10px;color:#000;">Prozessvariablen</div>
<svg class="a" style="left:427px;top:160px" width="9" height="9" viewBox="0 0 9 9"><path d="M1 1L8 8M8 1L1 8" stroke="#555" stroke-width="1.9"/></svg>
<svg class="a" style="left:450px;top:158px" width="18" height="15" viewBox="0 0 18 15"><circle cx="2.8" cy="4.5" r="2.3" fill="#2e6db5"/><rect x="3" y="3.6" width="6" height="1.8" fill="#2e6db5"/><path d="M9.5 3.5A3.5 3.5 0 1 1 14.5 8" fill="none" stroke="#2e6db5" stroke-width="2"/><path d="M16 9H9M12 6L8.5 9.5L12 13" fill="none" stroke="#2e6db5" stroke-width="2.2"/></svg>
<div class="t" style="left:467px;top:159px;font-size:12.10px;color:#000;">SPS-Import</div>
<svg class="a" style="left:538px;top:160px" width="9" height="9" viewBox="0 0 9 9"><path d="M1 1L8 8M8 1L1 8" stroke="#555" stroke-width="1.9"/></svg>
<div class="t" style="left:211px;top:193px;font-size:11.99px;color:#000;">Num. Klasse:</div>
<div class="a" style="left:279px;top:188px;width:160px;height:21px;background:#fff;border:1px solid #abadb3"></div>
<div class="a" style="left:420px;top:190px;width:17px;height:17px;background:#e6e6e6;border:1px solid #acacac"></div>
<svg class="a" style="left:424px;top:196px" width="10" height="6" viewBox="0 0 10 6"><path d="M1 1L5 5L9 1" fill="none" stroke="#606060" stroke-width="1.2"/></svg>
<div class="t" style="left:283px;top:193px;font-size:11.99px;color:#000;">DefaultNumericClass</div>
<div class="t" style="left:456px;top:193px;font-size:11.99px;color:#000;">Log. Klasse:</div>
<div class="a" style="left:520px;top:188px;width:160px;height:21px;background:#fff;border:1px solid #abadb3"></div>
<div class="a" style="left:661px;top:190px;width:17px;height:17px;background:#e6e6e6;border:1px solid #acacac"></div>
<svg class="a" style="left:665px;top:196px" width="10" height="6" viewBox="0 0 10 6"><path d="M1 1L5 5L9 1" fill="none" stroke="#606060" stroke-width="1.2"/></svg>
<div class="t" style="left:524px;top:193px;font-size:11.99px;color:#000;">DefaultBooleanClass</div>
<div class="t" style="left:696px;top:193px;font-size:11.99px;color:#000;">Text Klasse:</div>
<div class="a" style="left:761px;top:188px;width:160px;height:21px;background:#fff;border:1px solid #abadb3"></div>
<div class="a" style="left:902px;top:190px;width:17px;height:17px;background:#e6e6e6;border:1px solid #acacac"></div>
<svg class="a" style="left:906px;top:196px" width="10" height="6" viewBox="0 0 10 6"><path d="M1 1L5 5L9 1" fill="none" stroke="#606060" stroke-width="1.2"/></svg>
<div class="t" style="left:765px;top:193px;font-size:11.99px;color:#000;">DefaultStringClass</div>
<div class="a" style="left:945px;top:190px;width:125px;height:21px;background:#e1e1e1;border:1px solid #adadad"></div>
<div class="t" style="left:962px;top:194px;font-size:11.99px;color:#000;">Klassen verwalten</div>
<div class="a" style="left:220px;top:220px;width:13px;height:13px;background:#fff;border:1px solid #333"></div>
<div class="t" style="left:237px;top:220px;font-size:11.99px;color:#000;">Min/Max von SPS übernehmen</div>
<div class="a" style="left:417px;top:220px;width:13px;height:13px;background:#fff;border:1px solid #333"></div>
<div class="t" style="left:435px;top:220px;font-size:11.99px;color:#000;">Nachkommastellen von SPS übernehmen</div>
<div class="a" style="left:650px;top:220px;width:13px;height:13px;background:#fff;border:1px solid #333"></div>
<div class="t" style="left:667px;top:220px;font-size:11.99px;color:#000;">Kommentar von SPS übernehmen</div>
<div class="a" style="left:220px;top:241px;width:852px;height:552px;background:#fff"></div>
<div class="a" style="left:239px;top:241px;width:833px;height:23px;background:#e6e6e6;border-bottom:1px solid #d5d5d5"></div>
<div class="a" style="left:419px;top:241px;width:1px;height:23px;background:#d2d2d2"></div>
<div class="a" style="left:734px;top:241px;width:1px;height:23px;background:#d2d2d2"></div>
<div class="a" style="left:1064px;top:241px;width:1px;height:23px;background:#d2d2d2"></div>
<div class="t" style="left:244px;top:247px;font-size:11.99px;color:#000;">Symbol</div>
<div class="t" style="left:424px;top:247px;font-size:11.99px;color:#000;">ImportParameter</div>
<div class="t" style="left:738px;top:247px;font-size:11.99px;color:#000;">Aktion</div>
<svg class="a" style="left:407px;top:248px" width="10" height="9" viewBox="0 0 10 9"><path d="M0 4h3" stroke="#111" stroke-width="1.2"/><rect x="3.5" y="1.5" width="5" height="5" fill="#fff" stroke="#111"/><path d="M3 0v9" stroke="#111" stroke-width="1.2"/><path d="M3.5 5.5h5" stroke="#111" stroke-width="1.5"/></svg>
<svg class="a" style="left:722px;top:248px" width="10" height="9" viewBox="0 0 10 9"><path d="M0 4h3" stroke="#111" stroke-width="1.2"/><rect x="3.5" y="1.5" width="5" height="5" fill="#fff" stroke="#111"/><path d="M3 0v9" stroke="#111" stroke-width="1.2"/><path d="M3.5 5.5h5" stroke="#111" stroke-width="1.5"/></svg>
<svg class="a" style="left:1052px;top:248px" width="10" height="9" viewBox="0 0 10 9"><path d="M0 4h3" stroke="#111" stroke-width="1.2"/><rect x="3.5" y="1.5" width="5" height="5" fill="#fff" stroke="#111"/><path d="M3 0v9" stroke="#111" stroke-width="1.2"/><path d="M3.5 5.5h5" stroke="#111" stroke-width="1.5"/></svg>
<div class="a" style="left:1069px;top:247px;width:1px;height:1px;background:#c86a2a"></div>
<div class="a" style="left:1071px;top:252px;width:1px;height:1px;background:#222"></div>
<div class="a" style="left:1072px;top:241px;width:17px;height:6px;background:#fff;border:1px solid #b8c8dc"></div>
<div class="a" style="left:289px;top:264px;width:783px;height:19px;background:#e8e8e8;border-bottom:1px dotted #a8a8a8"></div>
<div class="a" style="left:1064px;top:264px;width:1px;height:19px;border-left:1px dotted #b0b0b0"></div>
<div class="a" style="left:734px;top:264px;width:1px;height:19px;border-left:1px dotted #c8c8c8"></div>
<div class="a" style="left:239px;top:264px;width:50px;height:19px;background:#e6e6e6;border:1px solid #fff;border-right-color:#a8a8a8;border-bottom-color:#a8a8a8;border-left-color:#d0d0d0"></div>
<svg class="a" style="left:257px;top:266px" width="15" height="14" viewBox="0 0 15 14"><path d="M1 1H13L7 6.5V12H5.2V6.5Z" fill="#666"/><path d="M12.4 1.2L8.5 5.2" stroke="#fff" stroke-width="1.3"/><path d="M8.5 8L13 12.5M13 8L8.5 12.5" stroke="#d0301c" stroke-width="1.9"/></svg>
<div class="t" style="left:293px;top:268px;font-size:11.99px;color:#8c8c8c;">Über diese Zeile kann für jede Spalte ein Filter gesetzt werden...</div>
<div class="a" style="left:229px;top:274px;width:1px;height:519px;border-left:1px dotted #8a8a8a"></div>
<div class="a" style="left:230px;top:274px;width:9px;height:1px;border-top:1px dotted #8a8a8a"></div>
<div class="a" style="left:220px;top:289px;width:852px;height:504px;overflow:hidden">
<div class="a" style="left:69px;top:0px;width:783px;height:1px;background:repeating-linear-gradient(90deg,#fff 0 1px,#b9b9b9 1px 2px)"></div>
<div class="a" style="left:0;top:1px;width:852px;height:19px"><div class="a" style="left:9px;top:9px;width:10px;height:1px;border-top:1px dotted #8a8a8a"></div><div class="a" style="left:19px;top:0px;width:50px;height:19px;background:#e6e6e6;border-bottom:1px solid #c8c8c8;border-left:1px solid #cfcfcf"></div><div class="a" style="left:69px;top:0px;width:445px;height:18px;background:#90ee90"></div><div class="a" style="left:514px;top:0px;width:330px;height:18px;background:#ffff00"></div><div class="a" style="left:844px;top:0px;width:8px;height:18px;background:#fff"></div><div class="a" style="left:69px;top:18px;width:783px;height:1px;background:repeating-linear-gradient(90deg,#fff 0 1px,#b9b9b9 1px 2px)"></div><div class="a" style="left:69px;top:0px;width:1px;height:18px;background:repeating-linear-gradient(180deg,#fff 0 1px,#b9b9b9 1px 2px)"></div><div class="a" style="left:199px;top:0px;width:1px;height:18px;background:repeating-linear-gradient(180deg,#fff 0 1px,#b9b9b9 1px 2px)"></div><div class="a" style="left:514px;top:0px;width:1px;height:18px;background:repeating-linear-gradient(180deg,#fff 0 1px,#b9b9b9 1px 2px)"></div><div class="a" style="left:844px;top:0px;width:1px;height:18px;background:repeating-linear-gradient(180deg,#fff 0 1px,#b9b9b9 1px 2px)"></div><div class="t" style="left:24px;top:3px;font-size:11.99px;color:#000;">1</div><div class="t" style="left:74px;top:3px;font-size:11.99px;color:#000;">BOOLTEST</div><div class="a" style="left:204px;top:3px;width:311px;height:15px;overflow:hidden"><div class="t" style="left:0px;top:0px;font-size:11.99px;color:#000;white-space:pre">ParamValue0='BOOLTEST',  MinExtern='0',  MinIntern='0',  M<span style="letter-spacing:-0.6px">...</span></div></div><div class="t" style="left:517px;top:3px;font-size:11.99px;color:#000;">Jetzt nicht importieren</div></div>
<div class="a" style="left:0;top:20px;width:852px;height:19px"><div class="a" style="left:9px;top:9px;width:10px;height:1px;border-top:1px dotted #8a8a8a"></div><div class="a" style="left:19px;top:0px;width:50px;height:19px;background:#e6e6e6;border-bottom:1px solid #c8c8c8;border-left:1px solid #cfcfcf"></div><div class="a" style="left:69px;top:0px;width:445px;height:18px;background:#90ee90"></div><div class="a" style="left:514px;top:0px;width:330px;height:18px;background:#ffff00"></div><div class="a" style="left:844px;top:0px;width:8px;height:18px;background:#e6eefa"></div><div class="a" style="left:69px;top:18px;width:783px;height:1px;background:repeating-linear-gradient(90deg,#fff 0 1px,#b9b9b9 1px 2px)"></div><div class="a" style="left:69px;top:0px;width:1px;height:18px;background:repeating-linear-gradient(180deg,#fff 0 1px,#b9b9b9 1px 2px)"></div><div class="a" style="left:199px;top:0px;width:1px;height:18px;background:repeating-linear-gradient(180deg,#fff 0 1px,#b9b9b9 1px 2px)"></div><div class="a" style="left:514px;top:0px;width:1px;height:18px;background:repeating-linear-gradient(180deg,#fff 0 1px,#b9b9b9 1px 2px)"></div><div class="a" style="left:844px;top:0px;width:1px;height:18px;background:repeating-linear-gradient(180deg,#fff 0 1px,#b9b9b9 1px 2px)"></div><div class="t" style="left:24px;top:3px;font-size:11.99px;color:#000;">2</div><div class="t" style="left:74px;top:3px;font-size:11.99px;color:#000;">BYTETEST</div><div class="a" style="left:204px;top:3px;width:311px;height:15px;overflow:hidden"><div class="t" style="left:0px;top:0px;font-size:11.99px;color:#000;white-space:pre">ParamValue0='BYTETEST',  MinExtern='0',  MinIntern='0',  M<span style="letter-spacing:-0.6px">...</span></div></div><div class="t" style="left:517px;top:3px;font-size:11.99px;color:#000;">Jetzt nicht importieren</div></div>
<div class="a" style="left:0;top:39px;width:852px;height:19px"><div class="a" style="left:9px;top:9px;width:10px;height:1px;border-top:1px dotted #8a8a8a"></div><div class="a" style="left:19px;top:0px;width:50px;height:19px;background:#e6e6e6;border-bottom:1px solid #c8c8c8;border-left:1px solid #cfcfcf"></div><div class="a" style="left:69px;top:0px;width:445px;height:18px;background:#90ee90"></div><div class="a" style="left:514px;top:0px;width:330px;height:18px;background:#ffff00"></div><div class="a" style="left:844px;top:0px;width:8px;height:18px;background:#fff"></div><div class="a" style="left:69px;top:18px;width:783px;height:1px;background:repeating-linear-gradient(90deg,#fff 0 1px,#b9b9b9 1px 2px)"></div><div class="a" style="left:69px;top:0px;width:1px;height:18px;background:repeating-linear-gradient(180deg,#fff 0 1px,#b9b9b9 1px 2px)"></div><div class="a" style="left:199px;top:0px;width:1px;height:18px;background:repeating-linear-gradient(180deg,#fff 0 1px,#b9b9b9 1px 2px)"></div><div class="a" style="left:514px;top:0px;width:1px;height:18px;background:repeating-linear-gradient(180deg,#fff 0 1px,#b9b9b9 1px 2px)"></div><div class="a" style="left:844px;top:0px;width:1px;height:18px;background:repeating-linear-gradient(180deg,#fff 0 1px,#b9b9b9 1px 2px)"></div><div class="t" style="left:24px;top:3px;font-size:11.99px;color:#000;">3</div><div class="t" style="left:74px;top:3px;font-size:11.99px;color:#000;">G_ITEST</div><div class="a" style="left:204px;top:3px;width:311px;height:15px;overflow:hidden"><div class="t" style="left:0px;top:0px;font-size:11.99px;color:#000;white-space:pre">ParamValue0='G_ITEST',  MinExtern='-128',  MinIntern='-12<span style="letter-spacing:-0.6px">...</span></div></div><div class="t" style="left:517px;top:3px;font-size:11.99px;color:#000;">Jetzt nicht importieren</div></div>
<div class="a" style="left:0;top:58px;width:852px;height:19px"><div class="a" style="left:9px;top:9px;width:10px;height:1px;border-top:1px dotted #8a8a8a"></div><div class="a" style="left:19px;top:0px;width:50px;height:19px;background:#e6e6e6;border-bottom:1px solid #c8c8c8;border-left:1px solid #cfcfcf"></div><div class="a" style="left:69px;top:0px;width:445px;height:18px;background:#90ee90"></div><div class="a" style="left:514px;top:0px;width:330px;height:18px;background:#ffff00"></div><div class="a" style="left:844px;top:0px;width:8px;height:18px;background:#e6eefa"></div><div class="a" style="left:69px;top:18px;width:783px;height:1px;background:repeating-linear-gradient(90deg,#fff 0 1px,#b9b9b9 1px 2px)"></div><div class="a" style="left:69px;top:0px;width:1px;height:18px;background:repeating-linear-gradient(180deg,#fff 0 1px,#b9b9b9 1px 2px)"></div><div class="a" style="left:199px;top:0px;width:1px;height:18px;background:repeating-linear-gradient(180deg,#fff 0 1px,#b9b9b9 1px 2px)"></div><div class="a" style="left:514px;top:0px;width:1px;height:18px;background:repeating-linear-gradient(180deg,#fff 0 1px,#b9b9b9 1px 2px)"></div><div class="a" style="left:844px;top:0px;width:1px;height:18px;background:repeating-linear-gradient(180deg,#fff 0 1px,#b9b9b9 1px 2px)"></div><div class="t" style="left:24px;top:3px;font-size:11.99px;color:#000;">4</div><div class="t" style="left:74px;top:3px;font-size:11.99px;color:#000;">G_RTEST</div><div class="a" style="left:204px;top:3px;width:311px;height:15px;overflow:hidden"><div class="t" style="left:0px;top:0px;font-size:11.99px;color:#000;white-space:pre">ParamValue0='G_RTEST',  MinExtern='-2147483648',  MinIn<span style="letter-spacing:-0.6px">...</span></div></div><div class="t" style="left:517px;top:3px;font-size:11.99px;color:#000;">Jetzt nicht importieren</div></div>
<div class="a" style="left:0;top:77px;width:852px;height:19px"><div class="a" style="left:9px;top:9px;width:10px;height:1px;border-top:1px dotted #8a8a8a"></div><div class="a" style="left:19px;top:0px;width:50px;height:19px;background:#e6e6e6;border-bottom:1px solid #c8c8c8;border-left:1px solid #cfcfcf"></div><div class="a" style="left:69px;top:0px;width:445px;height:18px;background:#90ee90"></div><div class="a" style="left:514px;top:0px;width:330px;height:18px;background:#ffff00"></div><div class="a" style="left:844px;top:0px;width:8px;height:18px;background:#fff"></div><div class="a" style="left:69px;top:18px;width:783px;height:1px;background:repeating-linear-gradient(90deg,#fff 0 1px,#b9b9b9 1px 2px)"></div><div class="a" style="left:69px;top:0px;width:1px;height:18px;background:repeating-linear-gradient(180deg,#fff 0 1px,#b9b9b9 1px 2px)"></div><div class="a" style="left:199px;top:0px;width:1px;height:18px;background:repeating-linear-gradient(180deg,#fff 0 1px,#b9b9b9 1px 2px)"></div><div class="a" style="left:514px;top:0px;width:1px;height:18px;background:repeating-linear-gradient(180deg,#fff 0 1px,#b9b9b9 1px 2px)"></div><div class="a" style="left:844px;top:0px;width:1px;height:18px;background:repeating-linear-gradient(180deg,#fff 0 1px,#b9b9b9 1px 2px)"></div><div class="t" style="left:24px;top:3px;font-size:11.99px;color:#000;">5</div><div class="t" style="left:74px;top:3px;font-size:11.99px;color:#000;">G_XTEST</div><div class="a" style="left:204px;top:3px;width:311px;height:15px;overflow:hidden"><div class="t" style="left:0px;top:0px;font-size:11.99px;color:#000;white-space:pre">ParamValue0='G_XTEST',  MinExtern='0',  MinIntern='0',  Ma<span style="letter-spacing:-0.6px">...</span></div></div><div class="t" style="left:517px;top:3px;font-size:11.99px;color:#000;">Jetzt nicht importieren</div></div>
<div class="a" style="left:0;top:96px;width:852px;height:19px"><div class="a" style="left:9px;top:9px;width:10px;height:1px;border-top:1px dotted #8a8a8a"></div><div class="a" style="left:19px;top:0px;width:50px;height:19px;background:#e6e6e6;border-bottom:1px solid #c8c8c8;border-left:1px solid #cfcfcf"></div><div class="a" style="left:69px;top:0px;width:445px;height:18px;background:#90ee90"></div><div class="a" style="left:514px;top:0px;width:330px;height:18px;background:#ffff00"></div><div class="a" style="left:844px;top:0px;width:8px;height:18px;background:#e6eefa"></div><div class="a" style="left:69px;top:18px;width:783px;height:1px;background:repeating-linear-gradient(90deg,#fff 0 1px,#b9b9b9 1px 2px)"></div><div class="a" style="left:69px;top:0px;width:1px;height:18px;background:repeating-linear-gradient(180deg,#fff 0 1px,#b9b9b9 1px 2px)"></div><div class="a" style="left:199px;top:0px;width:1px;height:18px;background:repeating-linear-gradient(180deg,#fff 0 1px,#b9b9b9 1px 2px)"></div><div class="a" style="left:514px;top:0px;width:1px;height:18px;background:repeating-linear-gradient(180deg,#fff 0 1px,#b9b9b9 1px 2px)"></div><div class="a" style="left:844px;top:0px;width:1px;height:18px;background:repeating-linear-gradient(180deg,#fff 0 1px,#b9b9b9 1px 2px)"></div><div class="t" style="left:24px;top:3px;font-size:11.99px;color:#000;">6</div><div class="t" style="left:74px;top:3px;font-size:11.99px;color:#000;">ITEST</div><div class="a" style="left:204px;top:3px;width:311px;height:15px;overflow:hidden"><div class="t" style="left:0px;top:0px;font-size:11.99px;color:#000;white-space:pre">ParamValue0='ITEST',  MinExtern='0',  MinIntern='0',  MaxExt<span style="letter-spacing:-0.6px">...</span></div></div><div class="t" style="left:517px;top:3px;font-size:11.99px;color:#000;">Jetzt nicht importieren</div></div>
<div class="a" style="left:0;top:115px;width:852px;height:19px"><div class="a" style="left:9px;top:9px;width:10px;height:1px;border-top:1px dotted #8a8a8a"></div><div class="a" style="left:19px;top:0px;width:50px;height:19px;background:#e6e6e6;border-bottom:1px solid #c8c8c8;border-left:1px solid #cfcfcf"></div><div class="a" style="left:69px;top:0px;width:445px;height:18px;background:#90ee90"></div><div class="a" style="left:514px;top:0px;width:330px;height:18px;background:#ffff00"></div><div class="a" style="left:844px;top:0px;width:8px;height:18px;background:#fff"></div><div class="a" style="left:69px;top:18px;width:783px;height:1px;background:repeating-linear-gradient(90deg,#fff 0 1px,#b9b9b9 1px 2px)"></div><div class="a" style="left:69px;top:0px;width:1px;height:18px;background:repeating-linear-gradient(180deg,#fff 0 1px,#b9b9b9 1px 2px)"></div><div class="a" style="left:199px;top:0px;width:1px;height:18px;background:repeating-linear-gradient(180deg,#fff 0 1px,#b9b9b9 1px 2px)"></div><div class="a" style="left:514px;top:0px;width:1px;height:18px;background:repeating-linear-gradient(180deg,#fff 0 1px,#b9b9b9 1px 2px)"></div><div class="a" style="left:844px;top:0px;width:1px;height:18px;background:repeating-linear-gradient(180deg,#fff 0 1px,#b9b9b9 1px 2px)"></div><div class="t" style="left:24px;top:3px;font-size:11.99px;color:#000;">7</div><div class="t" style="left:74px;top:3px;font-size:11.99px;color:#000;">ITEST_U_CONTROL</div><div class="a" style="left:204px;top:3px;width:311px;height:15px;overflow:hidden"><div class="t" style="left:0px;top:0px;font-size:11.99px;color:#000;white-space:pre">ParamValue0='ITEST_U_CONTROL',  MinExtern='-32768',<span style="letter-spacing:-0.6px">...</span></div></div><div class="t" style="left:517px;top:3px;font-size:11.99px;color:#000;">Jetzt nicht importieren</div></div>
<div class="a" style="left:0;top:134px;width:852px;height:19px"><div class="a" style="left:9px;top:9px;width:10px;height:1px;border-top:1px dotted #8a8a8a"></div><div class="a" style="left:19px;top:0px;width:50px;height:19px;background:#e6e6e6;border-bottom:1px solid #c8c8c8;border-left:1px solid #cfcfcf"></div><div class="a" style="left:69px;top:0px;width:445px;height:18px;background:#90ee90"></div><div class="a" style="left:514px;top:0px;width:330px;height:18px;background:#ffff00"></div><div class="a" style="left:844px;top:0px;width:8px;height:18px;background:#e6eefa"></div><div class="a" style="left:69px;top:18px;width:783px;height:1px;background:repeating-linear-gradient(90deg,#fff 0 1px,#b9b9b9 1px 2px)"></div><div class="a" style="left:69px;top:0px;width:1px;height:18px;background:repeating-linear-gradient(180deg,#fff 0 1px,#b9b9b9 1px 2px)"></div><div class="a" style="left:199px;top:0px;width:1px;height:18px;background:repeating-linear-gradient(180deg,#fff 0 1px,#b9b9b9 1px 2px)"></div><div class="a" style="left:514px;top:0px;width:1px;height:18px;background:repeating-linear-gradient(180deg,#fff 0 1px,#b9b9b9 1px 2px)"></div><div class="a" style="left:844px;top:0px;width:1px;height:18px;background:repeating-linear-gradient(180deg,#fff 0 1px,#b9b9b9 1px 2px)"></div><div class="t" style="left:24px;top:3px;font-size:11.99px;color:#000;">8</div><div class="t" style="left:74px;top:3px;font-size:11.99px;color:#000;">RTEST</div><div class="a" style="left:204px;top:3px;width:311px;height:15px;overflow:hidden"><div class="t" style="left:0px;top:0px;font-size:11.99px;color:#000;white-space:pre">ParamValue0='RTEST',  MinExtern='-2147483648',  MinInter<span style="letter-spacing:-0.6px">...</span></div></div><div class="t" style="left:517px;top:3px;font-size:11.99px;color:#000;">Jetzt nicht importieren</div></div>
<div class="a" style="left:0;top:153px;width:852px;height:19px"><div class="a" style="left:9px;top:9px;width:10px;height:1px;border-top:1px dotted #8a8a8a"></div><div class="a" style="left:19px;top:0px;width:50px;height:19px;background:#e6e6e6;border-bottom:1px solid #c8c8c8;border-left:1px solid #cfcfcf"></div><div class="a" style="left:69px;top:0px;width:445px;height:18px;background:#90ee90"></div><div class="a" style="left:514px;top:0px;width:330px;height:18px;background:#ffff00"></div><div class="a" style="left:844px;top:0px;width:8px;height:18px;background:#fff"></div><div class="a" style="left:69px;top:18px;width:783px;height:1px;background:repeating-linear-gradient(90deg,#fff 0 1px,#b9b9b9 1px 2px)"></div><div class="a" style="left:69px;top:0px;width:1px;height:18px;background:repeating-linear-gradient(180deg,#fff 0 1px,#b9b9b9 1px 2px)"></div><div class="a" style="left:199px;top:0px;width:1px;height:18px;background:repeating-linear-gradient(180deg,#fff 0 1px,#b9b9b9 1px 2px)"></div><div class="a" style="left:514px;top:0px;width:1px;height:18px;background:repeating-linear-gradient(180deg,#fff 0 1px,#b9b9b9 1px 2px)"></div><div class="a" style="left:844px;top:0px;width:1px;height:18px;background:repeating-linear-gradient(180deg,#fff 0 1px,#b9b9b9 1px 2px)"></div><div class="t" style="left:24px;top:3px;font-size:11.99px;color:#000;">9</div><div class="t" style="left:74px;top:3px;font-size:11.99px;color:#000;">RTEST_U_CONTROL</div><div class="a" style="left:204px;top:3px;width:311px;height:15px;overflow:hidden"><div class="t" style="left:0px;top:0px;font-size:11.99px;color:#000;white-space:pre">ParamValue0='RTEST_U_CONTROL',  MinExtern='-214748<span style="letter-spacing:-0.6px">...</span></div></div><div class="t" style="left:517px;top:3px;font-size:11.99px;color:#000;">Jetzt nicht importieren</div></div>
<div class="a" style="left:0;top:172px;width:852px;height:19px"><div class="a" style="left:9px;top:9px;width:10px;height:1px;border-top:1px dotted #8a8a8a"></div><div class="a" style="left:19px;top:0px;width:50px;height:19px;background:#e6e6e6;border-bottom:1px solid #c8c8c8;border-left:1px solid #cfcfcf"></div><div class="a" style="left:69px;top:0px;width:445px;height:18px;background:#90ee90"></div><div class="a" style="left:514px;top:0px;width:330px;height:18px;background:#ffff00"></div><div class="a" style="left:844px;top:0px;width:8px;height:18px;background:#e6eefa"></div><div class="a" style="left:69px;top:18px;width:783px;height:1px;background:repeating-linear-gradient(90deg,#fff 0 1px,#b9b9b9 1px 2px)"></div><div class="a" style="left:69px;top:0px;width:1px;height:18px;background:repeating-linear-gradient(180deg,#fff 0 1px,#b9b9b9 1px 2px)"></div><div class="a" style="left:199px;top:0px;width:1px;height:18px;background:repeating-linear-gradient(180deg,#fff 0 1px,#b9b9b9 1px 2px)"></div><div class="a" style="left:514px;top:0px;width:1px;height:18px;background:repeating-linear-gradient(180deg,#fff 0 1px,#b9b9b9 1px 2px)"></div><div class="a" style="left:844px;top:0px;width:1px;height:18px;background:repeating-linear-gradient(180deg,#fff 0 1px,#b9b9b9 1px 2px)"></div><div class="t" style="left:24px;top:3px;font-size:11.99px;color:#000;">10</div><div class="t" style="left:74px;top:3px;font-size:11.99px;color:#000;">VIN0</div><div class="a" style="left:204px;top:3px;width:311px;height:15px;overflow:hidden"><div class="t" style="left:0px;top:0px;font-size:11.99px;color:#000;white-space:pre">ParamValue0='VIN0',  MinExtern='-2147483648',  MinIntern='<span style="letter-spacing:-0.6px">...</span></div></div><div class="t" style="left:517px;top:3px;font-size:11.99px;color:#000;">Jetzt nicht importieren</div></div>
<div class="a" style="left:0;top:191px;width:852px;height:19px"><div class="a" style="left:9px;top:9px;width:10px;height:1px;border-top:1px dotted #8a8a8a"></div><div class="a" style="left:19px;top:0px;width:50px;height:19px;background:#e6e6e6;border-bottom:1px solid #c8c8c8;border-left:1px solid #cfcfcf"></div><div class="a" style="left:69px;top:0px;width:445px;height:18px;background:#90ee90"></div><div class="a" style="left:514px;top:0px;width:330px;height:18px;background:#ffff00"></div><div class="a" style="left:844px;top:0px;width:8px;height:18px;background:#fff"></div><div class="a" style="left:69px;top:18px;width:783px;height:1px;background:repeating-linear-gradient(90deg,#fff 0 1px,#b9b9b9 1px 2px)"></div><div class="a" style="left:69px;top:0px;width:1px;height:18px;background:repeating-linear-gradient(180deg,#fff 0 1px,#b9b9b9 1px 2px)"></div><div class="a" style="left:199px;top:0px;width:1px;height:18px;background:repeating-linear-gradient(180deg,#fff 0 1px,#b9b9b9 1px 2px)"></div><div class="a" style="left:514px;top:0px;width:1px;height:18px;background:repeating-linear-gradient(180deg,#fff 0 1px,#b9b9b9 1px 2px)"></div><div class="a" style="left:844px;top:0px;width:1px;height:18px;background:repeating-linear-gradient(180deg,#fff 0 1px,#b9b9b9 1px 2px)"></div><div class="t" style="left:24px;top:3px;font-size:11.99px;color:#000;">11</div><div class="t" style="left:74px;top:3px;font-size:11.99px;color:#000;">VIN1</div><div class="a" style="left:204px;top:3px;width:311px;height:15px;overflow:hidden"><div class="t" style="left:0px;top:0px;font-size:11.99px;color:#000;white-space:pre">ParamValue0='VIN1',  MinExtern='-2147483648',  MinIntern='<span style="letter-spacing:-0.6px">...</span></div></div><div class="t" style="left:517px;top:3px;font-size:11.99px;color:#000;">Jetzt nicht importieren</div></div>
<div class="a" style="left:0;top:210px;width:852px;height:19px"><div class="a" style="left:9px;top:9px;width:10px;height:1px;border-top:1px dotted #8a8a8a"></div><div class="a" style="left:19px;top:0px;width:50px;height:19px;background:#e6e6e6;border-bottom:1px solid #c8c8c8;border-left:1px solid #cfcfcf"></div><div class="a" style="left:69px;top:0px;width:445px;height:18px;background:#90ee90"></div><div class="a" style="left:514px;top:0px;width:330px;height:18px;background:#ffff00"></div><div class="a" style="left:844px;top:0px;width:8px;height:18px;background:#e6eefa"></div><div class="a" style="left:69px;top:18px;width:783px;height:1px;background:repeating-linear-gradient(90deg,#fff 0 1px,#b9b9b9 1px 2px)"></div><div class="a" style="left:69px;top:0px;width:1px;height:18px;background:repeating-linear-gradient(180deg,#fff 0 1px,#b9b9b9 1px 2px)"></div><div class="a" style="left:199px;top:0px;width:1px;height:18px;background:repeating-linear-gradient(180deg,#fff 0 1px,#b9b9b9 1px 2px)"></div><div class="a" style="left:514px;top:0px;width:1px;height:18px;background:repeating-linear-gradient(180deg,#fff 0 1px,#b9b9b9 1px 2px)"></div><div class="a" style="left:844px;top:0px;width:1px;height:18px;background:repeating-linear-gradient(180deg,#fff 0 1px,#b9b9b9 1px 2px)"></div><div class="t" style="left:24px;top:3px;font-size:11.99px;color:#000;">12</div><div class="t" style="left:74px;top:3px;font-size:11.99px;color:#000;">VIN2</div><div class="a" style="left:204px;top:3px;width:311px;height:15px;overflow:hidden"><div class="t" style="left:0px;top:0px;font-size:11.99px;color:#000;white-space:pre">ParamValue0='VIN2',  MinExtern='-2147483648',  MinIntern='<span style="letter-spacing:-0.6px">...</span></div></div><div class="t" style="left:517px;top:3px;font-size:11.99px;color:#000;">Jetzt nicht importieren</div></div>
<div class="a" style="left:0;top:229px;width:852px;height:19px"><div class="a" style="left:9px;top:9px;width:10px;height:1px;border-top:1px dotted #8a8a8a"></div><div class="a" style="left:19px;top:0px;width:50px;height:19px;background:#e6e6e6;border-bottom:1px solid #c8c8c8;border-left:1px solid #cfcfcf"></div><div class="a" style="left:69px;top:0px;width:445px;height:18px;background:#90ee90"></div><div class="a" style="left:514px;top:0px;width:330px;height:18px;background:#ffff00"></div><div class="a" style="left:844px;top:0px;width:8px;height:18px;background:#fff"></div><div class="a" style="left:69px;top:18px;width:783px;height:1px;background:repeating-linear-gradient(90deg,#fff 0 1px,#b9b9b9 1px 2px)"></div><div class="a" style="left:69px;top:0px;width:1px;height:18px;background:repeating-linear-gradient(180deg,#fff 0 1px,#b9b9b9 1px 2px)"></div><div class="a" style="left:199px;top:0px;width:1px;height:18px;background:repeating-linear-gradient(180deg,#fff 0 1px,#b9b9b9 1px 2px)"></div><div class="a" style="left:514px;top:0px;width:1px;height:18px;background:repeating-linear-gradient(180deg,#fff 0 1px,#b9b9b9 1px 2px)"></div><div class="a" style="left:844px;top:0px;width:1px;height:18px;background:repeating-linear-gradient(180deg,#fff 0 1px,#b9b9b9 1px 2px)"></div><div class="t" style="left:24px;top:3px;font-size:11.99px;color:#000;">13</div><div class="t" style="left:74px;top:3px;font-size:11.99px;color:#000;">VIN3</div><div class="a" style="left:204px;top:3px;width:311px;height:15px;overflow:hidden"><div class="t" style="left:0px;top:0px;font-size:11.99px;color:#000;white-space:pre">ParamValue0='VIN3',  MinExtern='-2147483648',  MinIntern='<span style="letter-spacing:-0.6px">...</span></div></div><div class="t" style="left:517px;top:3px;font-size:11.99px;color:#000;">Jetzt nicht importieren</div></div>
<div class="a" style="left:0;top:248px;width:852px;height:19px"><div class="a" style="left:9px;top:9px;width:10px;height:1px;border-top:1px dotted #8a8a8a"></div><div class="a" style="left:19px;top:0px;width:50px;height:19px;background:#e6e6e6;border-bottom:1px solid #c8c8c8;border-left:1px solid #cfcfcf"></div><div class="a" style="left:69px;top:0px;width:445px;height:18px;background:#90ee90"></div><div class="a" style="left:514px;top:0px;width:330px;height:18px;background:#ffff00"></div><div class="a" style="left:844px;top:0px;width:8px;height:18px;background:#e6eefa"></div><div class="a" style="left:69px;top:18px;width:783px;height:1px;background:repeating-linear-gradient(90deg,#fff 0 1px,#b9b9b9 1px 2px)"></div><div class="a" style="left:69px;top:0px;width:1px;height:18px;background:repeating-linear-gradient(180deg,#fff 0 1px,#b9b9b9 1px 2px)"></div><div class="a" style="left:199px;top:0px;width:1px;height:18px;background:repeating-linear-gradient(180deg,#fff 0 1px,#b9b9b9 1px 2px)"></div><div class="a" style="left:514px;top:0px;width:1px;height:18px;background:repeating-linear-gradient(180deg,#fff 0 1px,#b9b9b9 1px 2px)"></div><div class="a" style="left:844px;top:0px;width:1px;height:18px;background:repeating-linear-gradient(180deg,#fff 0 1px,#b9b9b9 1px 2px)"></div><div class="t" style="left:24px;top:3px;font-size:11.99px;color:#000;">14</div><div class="t" style="left:74px;top:3px;font-size:11.99px;color:#000;">VIN4</div><div class="a" style="left:204px;top:3px;width:311px;height:15px;overflow:hidden"><div class="t" style="left:0px;top:0px;font-size:11.99px;color:#000;white-space:pre">ParamValue0='VIN4',  MinExtern='-2147483648',  MinIntern='<span style="letter-spacing:-0.6px">...</span></div></div><div class="t" style="left:517px;top:3px;font-size:11.99px;color:#000;">Jetzt nicht importieren</div></div>
<div class="a" style="left:0;top:267px;width:852px;height:19px"><div class="a" style="left:9px;top:9px;width:10px;height:1px;border-top:1px dotted #8a8a8a"></div><div class="a" style="left:19px;top:0px;width:50px;height:19px;background:#e6e6e6;border-bottom:1px solid #c8c8c8;border-left:1px solid #cfcfcf"></div><div class="a" style="left:69px;top:0px;width:445px;height:18px;background:#90ee90"></div><div class="a" style="left:514px;top:0px;width:330px;height:18px;background:#ffff00"></div><div class="a" style="left:844px;top:0px;width:8px;height:18px;background:#fff"></div><div class="a" style="left:69px;top:18px;width:783px;height:1px;background:repeating-linear-gradient(90deg,#fff 0 1px,#b9b9b9 1px 2px)"></div><div class="a" style="left:69px;top:0px;width:1px;height:18px;background:repeating-linear-gradient(180deg,#fff 0 1px,#b9b9b9 1px 2px)"></div><div class="a" style="left:199px;top:0px;width:1px;height:18px;background:repeating-linear-gradient(180deg,#fff 0 1px,#b9b9b9 1px 2px)"></div><div class="a" style="left:514px;top:0px;width:1px;height:18px;background:repeating-linear-gradient(180deg,#fff 0 1px,#b9b9b9 1px 2px)"></div><div class="a" style="left:844px;top:0px;width:1px;height:18px;background:repeating-linear-gradient(180deg,#fff 0 1px,#b9b9b9 1px 2px)"></div><div class="t" style="left:24px;top:3px;font-size:11.99px;color:#000;">15</div><div class="t" style="left:74px;top:3px;font-size:11.99px;color:#000;">VIN5</div><div class="a" style="left:204px;top:3px;width:311px;height:15px;overflow:hidden"><div class="t" style="left:0px;top:0px;font-size:11.99px;color:#000;white-space:pre">ParamValue0='VIN5',  MinExtern='-2147483648',  MinIntern='<span style="letter-spacing:-0.6px">...</span></div></div><div class="t" style="left:517px;top:3px;font-size:11.99px;color:#000;">Jetzt nicht importieren</div></div>
<div class="a" style="left:0;top:286px;width:852px;height:19px"><div class="a" style="left:9px;top:9px;width:10px;height:1px;border-top:1px dotted #8a8a8a"></div><div class="a" style="left:19px;top:0px;width:50px;height:19px;background:#e6e6e6;border-bottom:1px solid #c8c8c8;border-left:1px solid #cfcfcf"></div><div class="a" style="left:69px;top:0px;width:445px;height:18px;background:#90ee90"></div><div class="a" style="left:514px;top:0px;width:330px;height:18px;background:#ffff00"></div><div class="a" style="left:844px;top:0px;width:8px;height:18px;background:#e6eefa"></div><div class="a" style="left:69px;top:18px;width:783px;height:1px;background:repeating-linear-gradient(90deg,#fff 0 1px,#b9b9b9 1px 2px)"></div><div class="a" style="left:69px;top:0px;width:1px;height:18px;background:repeating-linear-gradient(180deg,#fff 0 1px,#b9b9b9 1px 2px)"></div><div class="a" style="left:199px;top:0px;width:1px;height:18px;background:repeating-linear-gradient(180deg,#fff 0 1px,#b9b9b9 1px 2px)"></div><div class="a" style="left:514px;top:0px;width:1px;height:18px;background:repeating-linear-gradient(180deg,#fff 0 1px,#b9b9b9 1px 2px)"></div><div class="a" style="left:844px;top:0px;width:1px;height:18px;background:repeating-linear-gradient(180deg,#fff 0 1px,#b9b9b9 1px 2px)"></div><div class="t" style="left:24px;top:3px;font-size:11.99px;color:#000;">16</div><div class="t" style="left:74px;top:3px;font-size:11.99px;color:#000;">VIN6</div><div class="a" style="left:204px;top:3px;width:311px;height:15px;overflow:hidden"><div class="t" style="left:0px;top:0px;font-size:11.99px;color:#000;white-space:pre">ParamValue0='VIN6',  MinExtern='-2147483648',  MinIntern='<span style="letter-spacing:-0.6px">...</span></div></div><div class="t" style="left:517px;top:3px;font-size:11.99px;color:#000;">Jetzt nicht importieren</div></div>
<div class="a" style="left:0;top:305px;width:852px;height:19px"><div class="a" style="left:9px;top:9px;width:10px;height:1px;border-top:1px dotted #8a8a8a"></div><div class="a" style="left:19px;top:0px;width:50px;height:19px;background:#e6e6e6;border-bottom:1px solid #c8c8c8;border-left:1px solid #cfcfcf"></div><div class="a" style="left:69px;top:0px;width:445px;height:18px;background:#90ee90"></div><div class="a" style="left:514px;top:0px;width:330px;height:18px;background:#ffff00"></div><div class="a" style="left:844px;top:0px;width:8px;height:18px;background:#fff"></div><div class="a" style="left:69px;top:18px;width:783px;height:1px;background:repeating-linear-gradient(90deg,#fff 0 1px,#b9b9b9 1px 2px)"></div><div class="a" style="left:69px;top:0px;width:1px;height:18px;background:repeating-linear-gradient(180deg,#fff 0 1px,#b9b9b9 1px 2px)"></div><div class="a" style="left:199px;top:0px;width:1px;height:18px;background:repeating-linear-gradient(180deg,#fff 0 1px,#b9b9b9 1px 2px)"></div><div class="a" style="left:514px;top:0px;width:1px;height:18px;background:repeating-linear-gradient(180deg,#fff 0 1px,#b9b9b9 1px 2px)"></div><div class="a" style="left:844px;top:0px;width:1px;height:18px;background:repeating-linear-gradient(180deg,#fff 0 1px,#b9b9b9 1px 2px)"></div><div class="t" style="left:24px;top:3px;font-size:11.99px;color:#000;">17</div><div class="t" style="left:74px;top:3px;font-size:11.99px;color:#000;">VIN7</div><div class="a" style="left:204px;top:3px;width:311px;height:15px;overflow:hidden"><div class="t" style="left:0px;top:0px;font-size:11.99px;color:#000;white-space:pre">ParamValue0='VIN7',  MinExtern='-2147483648',  MinIntern='<span style="letter-spacing:-0.6px">...</span></div></div><div class="t" style="left:517px;top:3px;font-size:11.99px;color:#000;">Jetzt nicht importieren</div></div>
<div class="a" style="left:0;top:324px;width:852px;height:19px"><div class="a" style="left:9px;top:9px;width:10px;height:1px;border-top:1px dotted #8a8a8a"></div><div class="a" style="left:19px;top:0px;width:50px;height:19px;background:#e6e6e6;border-bottom:1px solid #c8c8c8;border-left:1px solid #cfcfcf"></div><div class="a" style="left:69px;top:0px;width:445px;height:18px;background:#90ee90"></div><div class="a" style="left:514px;top:0px;width:330px;height:18px;background:#ffff00"></div><div class="a" style="left:844px;top:0px;width:8px;height:18px;background:#e6eefa"></div><div class="a" style="left:69px;top:18px;width:783px;height:1px;background:repeating-linear-gradient(90deg,#fff 0 1px,#b9b9b9 1px 2px)"></div><div class="a" style="left:69px;top:0px;width:1px;height:18px;background:repeating-linear-gradient(180deg,#fff 0 1px,#b9b9b9 1px 2px)"></div><div class="a" style="left:199px;top:0px;width:1px;height:18px;background:repeating-linear-gradient(180deg,#fff 0 1px,#b9b9b9 1px 2px)"></div><div class="a" style="left:514px;top:0px;width:1px;height:18px;background:repeating-linear-gradient(180deg,#fff 0 1px,#b9b9b9 1px 2px)"></div><div class="a" style="left:844px;top:0px;width:1px;height:18px;background:repeating-linear-gradient(180deg,#fff 0 1px,#b9b9b9 1px 2px)"></div><div class="t" style="left:24px;top:3px;font-size:11.99px;color:#000;">18</div><div class="t" style="left:74px;top:3px;font-size:11.99px;color:#000;">VIN8</div><div class="a" style="left:204px;top:3px;width:311px;height:15px;overflow:hidden"><div class="t" style="left:0px;top:0px;font-size:11.99px;color:#000;white-space:pre">ParamValue0='VIN8',  MinExtern='-2147483648',  MinIntern='<span style="letter-spacing:-0.6px">...</span></div></div><div class="t" style="left:517px;top:3px;font-size:11.99px;color:#000;">Jetzt nicht importieren</div></div>
<div class="a" style="left:0;top:343px;width:852px;height:19px"><div class="a" style="left:9px;top:9px;width:10px;height:1px;border-top:1px dotted #8a8a8a"></div><div class="a" style="left:19px;top:0px;width:50px;height:19px;background:#e6e6e6;border-bottom:1px solid #c8c8c8;border-left:1px solid #cfcfcf"></div><div class="a" style="left:69px;top:0px;width:445px;height:18px;background:#90ee90"></div><div class="a" style="left:514px;top:0px;width:330px;height:18px;background:#ffff00"></div><div class="a" style="left:844px;top:0px;width:8px;height:18px;background:#fff"></div><div class="a" style="left:69px;top:18px;width:783px;height:1px;background:repeating-linear-gradient(90deg,#fff 0 1px,#b9b9b9 1px 2px)"></div><div class="a" style="left:69px;top:0px;width:1px;height:18px;background:repeating-linear-gradient(180deg,#fff 0 1px,#b9b9b9 1px 2px)"></div><div class="a" style="left:199px;top:0px;width:1px;height:18px;background:repeating-linear-gradient(180deg,#fff 0 1px,#b9b9b9 1px 2px)"></div><div class="a" style="left:514px;top:0px;width:1px;height:18px;background:repeating-linear-gradient(180deg,#fff 0 1px,#b9b9b9 1px 2px)"></div><div class="a" style="left:844px;top:0px;width:1px;height:18px;background:repeating-linear-gradient(180deg,#fff 0 1px,#b9b9b9 1px 2px)"></div><div class="t" style="left:24px;top:3px;font-size:11.99px;color:#000;">19</div><div class="t" style="left:74px;top:3px;font-size:11.99px;color:#000;">VIN9</div><div class="a" style="left:204px;top:3px;width:311px;height:15px;overflow:hidden"><div class="t" style="left:0px;top:0px;font-size:11.99px;color:#000;white-space:pre">ParamValue0='VIN9',  MinExtern='-2147483648',  MinIntern='<span style="letter-spacing:-0.6px">...</span></div></div><div class="t" style="left:517px;top:3px;font-size:11.99px;color:#000;">Jetzt nicht importieren</div></div>
<div class="a" style="left:0;top:362px;width:852px;height:19px"><div class="a" style="left:9px;top:9px;width:10px;height:1px;border-top:1px dotted #8a8a8a"></div><div class="a" style="left:19px;top:0px;width:50px;height:19px;background:#e6e6e6;border-bottom:1px solid #c8c8c8;border-left:1px solid #cfcfcf"></div><div class="a" style="left:69px;top:0px;width:445px;height:18px;background:#90ee90"></div><div class="a" style="left:514px;top:0px;width:330px;height:18px;background:#ffff00"></div><div class="a" style="left:844px;top:0px;width:8px;height:18px;background:#e6eefa"></div><div class="a" style="left:69px;top:18px;width:783px;height:1px;background:repeating-linear-gradient(90deg,#fff 0 1px,#b9b9b9 1px 2px)"></div><div class="a" style="left:69px;top:0px;width:1px;height:18px;background:repeating-linear-gradient(180deg,#fff 0 1px,#b9b9b9 1px 2px)"></div><div class="a" style="left:199px;top:0px;width:1px;height:18px;background:repeating-linear-gradient(180deg,#fff 0 1px,#b9b9b9 1px 2px)"></div><div class="a" style="left:514px;top:0px;width:1px;height:18px;background:repeating-linear-gradient(180deg,#fff 0 1px,#b9b9b9 1px 2px)"></div><div class="a" style="left:844px;top:0px;width:1px;height:18px;background:repeating-linear-gradient(180deg,#fff 0 1px,#b9b9b9 1px 2px)"></div><div class="t" style="left:24px;top:3px;font-size:11.99px;color:#000;">20</div><div class="t" style="left:74px;top:3px;font-size:11.99px;color:#000;">VOUT0</div><div class="a" style="left:204px;top:3px;width:311px;height:15px;overflow:hidden"><div class="t" style="left:0px;top:0px;font-size:11.99px;color:#000;white-space:pre">ParamValue0='VOUT0',  MinExtern='-2147483648',  MinInter<span style="letter-spacing:-0.6px">...</span></div></div><div class="t" style="left:517px;top:3px;font-size:11.99px;color:#000;">Jetzt nicht importieren</div></div>
<div class="a" style="left:0;top:381px;width:852px;height:19px"><div class="a" style="left:9px;top:9px;width:10px;height:1px;border-top:1px dotted #8a8a8a"></div><div class="a" style="left:19px;top:0px;width:50px;height:19px;background:#e6e6e6;border-bottom:1px solid #c8c8c8;border-left:1px solid #cfcfcf"></div><div class="a" style="left:69px;top:0px;width:445px;height:18px;background:#90ee90"></div><div class="a" style="left:514px;top:0px;width:330px;height:18px;background:#ffff00"></div><div class="a" style="left:844px;top:0px;width:8px;height:18px;background:#fff"></div><div class="a" style="left:69px;top:18px;width:783px;height:1px;background:repeating-linear-gradient(90deg,#fff 0 1px,#b9b9b9 1px 2px)"></div><div class="a" style="left:69px;top:0px;width:1px;height:18px;background:repeating-linear-gradient(180deg,#fff 0 1px,#b9b9b9 1px 2px)"></div><div class="a" style="left:199px;top:0px;width:1px;height:18px;background:repeating-linear-gradient(180deg,#fff 0 1px,#b9b9b9 1px 2px)"></div><div class="a" style="left:514px;top:0px;width:1px;height:18px;background:repeating-linear-gradient(180deg,#fff 0 1px,#b9b9b9 1px 2px)"></div><div class="a" style="left:844px;top:0px;width:1px;height:18px;background:repeating-linear-gradient(180deg,#fff 0 1px,#b9b9b9 1px 2px)"></div><div class="t" style="left:24px;top:3px;font-size:11.99px;color:#000;">21</div><div class="t" style="left:74px;top:3px;font-size:11.99px;color:#000;">VOUT1</div><div class="a" style="left:204px;top:3px;width:311px;height:15px;overflow:hidden"><div class="t" style="left:0px;top:0px;font-size:11.99px;color:#000;white-space:pre">ParamValue0='VOUT1',  MinExtern='-2147483648',  MinInter<span style="letter-spacing:-0.6px">...</span></div></div><div class="t" style="left:517px;top:3px;font-size:11.99px;color:#000;">Jetzt nicht importieren</div></div>
<div class="a" style="left:0;top:400px;width:852px;height:19px"><div class="a" style="left:9px;top:9px;width:10px;height:1px;border-top:1px dotted #8a8a8a"></div><div class="a" style="left:19px;top:0px;width:50px;height:19px;background:#e6e6e6;border-bottom:1px solid #c8c8c8;border-left:1px solid #cfcfcf"></div><div class="a" style="left:69px;top:0px;width:445px;height:18px;background:#90ee90"></div><div class="a" style="left:514px;top:0px;width:330px;height:18px;background:#ffff00"></div><div class="a" style="left:844px;top:0px;width:8px;height:18px;background:#e6eefa"></div><div class="a" style="left:69px;top:18px;width:783px;height:1px;background:repeating-linear-gradient(90deg,#fff 0 1px,#b9b9b9 1px 2px)"></div><div class="a" style="left:69px;top:0px;width:1px;height:18px;background:repeating-linear-gradient(180deg,#fff 0 1px,#b9b9b9 1px 2px)"></div><div class="a" style="left:199px;top:0px;width:1px;height:18px;background:repeating-linear-gradient(180deg,#fff 0 1px,#b9b9b9 1px 2px)"></div><div class="a" style="left:514px;top:0px;width:1px;height:18px;background:repeating-linear-gradient(180deg,#fff 0 1px,#b9b9b9 1px 2px)"></div><div class="a" style="left:844px;top:0px;width:1px;height:18px;background:repeating-linear-gradient(180deg,#fff 0 1px,#b9b9b9 1px 2px)"></div><div class="t" style="left:24px;top:3px;font-size:11.99px;color:#000;">22</div><div class="t" style="left:74px;top:3px;font-size:11.99px;color:#000;">VOUT2</div><div class="a" style="left:204px;top:3px;width:311px;height:15px;overflow:hidden"><div class="t" style="left:0px;top:0px;font-size:11.99px;color:#000;white-space:pre">ParamValue0='VOUT2',  MinExtern='-2147483648',  MinInter<span style="letter-spacing:-0.6px">...</span></div></div><div class="t" style="left:517px;top:3px;font-size:11.99px;color:#000;">Jetzt nicht importieren</div></div>
<div class="a" style="left:0;top:419px;width:852px;height:19px"><div class="a" style="left:9px;top:9px;width:10px;height:1px;border-top:1px dotted #8a8a8a"></div><div class="a" style="left:19px;top:0px;width:50px;height:19px;background:#e6e6e6;border-bottom:1px solid #c8c8c8;border-left:1px solid #cfcfcf"></div><div class="a" style="left:69px;top:0px;width:445px;height:18px;background:#90ee90"></div><div class="a" style="left:514px;top:0px;width:330px;height:18px;background:#ffff00"></div><div class="a" style="left:844px;top:0px;width:8px;height:18px;background:#fff"></div><div class="a" style="left:69px;top:18px;width:783px;height:1px;background:repeating-linear-gradient(90deg,#fff 0 1px,#b9b9b9 1px 2px)"></div><div class="a" style="left:69px;top:0px;width:1px;height:18px;background:repeating-linear-gradient(180deg,#fff 0 1px,#b9b9b9 1px 2px)"></div><div class="a" style="left:199px;top:0px;width:1px;height:18px;background:repeating-linear-gradient(180deg,#fff 0 1px,#b9b9b9 1px 2px)"></div><div class="a" style="left:514px;top:0px;width:1px;height:18px;background:repeating-linear-gradient(180deg,#fff 0 1px,#b9b9b9 1px 2px)"></div><div class="a" style="left:844px;top:0px;width:1px;height:18px;background:repeating-linear-gradient(180deg,#fff 0 1px,#b9b9b9 1px 2px)"></div><div class="t" style="left:24px;top:3px;font-size:11.99px;color:#000;">23</div><div class="t" style="left:74px;top:3px;font-size:11.99px;color:#000;">VOUT3</div><div class="a" style="left:204px;top:3px;width:311px;height:15px;overflow:hidden"><div class="t" style="left:0px;top:0px;font-size:11.99px;color:#000;white-space:pre">ParamValue0='VOUT3',  MinExtern='-2147483648',  MinInter<span style="letter-spacing:-0.6px">...</span></div></div><div class="t" style="left:517px;top:3px;font-size:11.99px;color:#000;">Jetzt nicht importieren</div></div>
<div class="a" style="left:0;top:438px;width:852px;height:19px"><div class="a" style="left:9px;top:9px;width:10px;height:1px;border-top:1px dotted #8a8a8a"></div><div class="a" style="left:19px;top:0px;width:50px;height:19px;background:#e6e6e6;border-bottom:1px solid #c8c8c8;border-left:1px solid #cfcfcf"></div><div class="a" style="left:69px;top:0px;width:445px;height:18px;background:#90ee90"></div><div class="a" style="left:514px;top:0px;width:330px;height:18px;background:#ffff00"></div><div class="a" style="left:844px;top:0px;width:8px;height:18px;background:#e6eefa"></div><div class="a" style="left:69px;top:18px;width:783px;height:1px;background:repeating-linear-gradient(90deg,#fff 0 1px,#b9b9b9 1px 2px)"></div><div class="a" style="left:69px;top:0px;width:1px;height:18px;background:repeating-linear-gradient(180deg,#fff 0 1px,#b9b9b9 1px 2px)"></div><div class="a" style="left:199px;top:0px;width:1px;height:18px;background:repeating-linear-gradient(180deg,#fff 0 1px,#b9b9b9 1px 2px)"></div><div class="a" style="left:514px;top:0px;width:1px;height:18px;background:repeating-linear-gradient(180deg,#fff 0 1px,#b9b9b9 1px 2px)"></div><div class="a" style="left:844px;top:0px;width:1px;height:18px;background:repeating-linear-gradient(180deg,#fff 0 1px,#b9b9b9 1px 2px)"></div><div class="t" style="left:24px;top:3px;font-size:11.99px;color:#000;">24</div><div class="t" style="left:74px;top:3px;font-size:11.99px;color:#000;">VOUT4</div><div class="a" style="left:204px;top:3px;width:311px;height:15px;overflow:hidden"><div class="t" style="left:0px;top:0px;font-size:11.99px;color:#000;white-space:pre">ParamValue0='VOUT4',  MinExtern='-2147483648',  MinInter<span style="letter-spacing:-0.6px">...</span></div></div><div class="t" style="left:517px;top:3px;font-size:11.99px;color:#000;">Jetzt nicht importieren</div></div>
<div class="a" style="left:0;top:457px;width:852px;height:19px"><div class="a" style="left:9px;top:9px;width:10px;height:1px;border-top:1px dotted #8a8a8a"></div><div class="a" style="left:19px;top:0px;width:50px;height:19px;background:#e6e6e6;border-bottom:1px solid #c8c8c8;border-left:1px solid #cfcfcf"></div><div class="a" style="left:69px;top:0px;width:445px;height:18px;background:#90ee90"></div><div class="a" style="left:514px;top:0px;width:330px;height:18px;background:#ffff00"></div><div class="a" style="left:844px;top:0px;width:8px;height:18px;background:#fff"></div><div class="a" style="left:69px;top:18px;width:783px;height:1px;background:repeating-linear-gradient(90deg,#fff 0 1px,#b9b9b9 1px 2px)"></div><div class="a" style="left:69px;top:0px;width:1px;height:18px;background:repeating-linear-gradient(180deg,#fff 0 1px,#b9b9b9 1px 2px)"></div><div class="a" style="left:199px;top:0px;width:1px;height:18px;background:repeating-linear-gradient(180deg,#fff 0 1px,#b9b9b9 1px 2px)"></div><div class="a" style="left:514px;top:0px;width:1px;height:18px;background:repeating-linear-gradient(180deg,#fff 0 1px,#b9b9b9 1px 2px)"></div><div class="a" style="left:844px;top:0px;width:1px;height:18px;background:repeating-linear-gradient(180deg,#fff 0 1px,#b9b9b9 1px 2px)"></div><div class="t" style="left:24px;top:3px;font-size:11.99px;color:#000;">25</div><div class="t" style="left:74px;top:3px;font-size:11.99px;color:#000;">VOUT5</div><div class="a" style="left:204px;top:3px;width:311px;height:15px;overflow:hidden"><div class="t" style="left:0px;top:0px;font-size:11.99px;color:#000;white-space:pre">ParamValue0='VOUT5',  MinExtern='-2147483648',  MinInter<span style="letter-spacing:-0.6px">...</span></div></div><div class="t" style="left:517px;top:3px;font-size:11.99px;color:#000;">Jetzt nicht importieren</div></div>
<div class="a" style="left:0;top:476px;width:852px;height:19px"><div class="a" style="left:9px;top:9px;width:10px;height:1px;border-top:1px dotted #8a8a8a"></div><div class="a" style="left:19px;top:0px;width:50px;height:19px;background:#e6e6e6;border-bottom:1px solid #c8c8c8;border-left:1px solid #cfcfcf"></div><div class="a" style="left:69px;top:0px;width:445px;height:18px;background:#90ee90"></div><div class="a" style="left:514px;top:0px;width:330px;height:18px;background:#ffff00"></div><div class="a" style="left:844px;top:0px;width:8px;height:18px;background:#e6eefa"></div><div class="a" style="left:69px;top:18px;width:783px;height:1px;background:repeating-linear-gradient(90deg,#fff 0 1px,#b9b9b9 1px 2px)"></div><div class="a" style="left:69px;top:0px;width:1px;height:18px;background:repeating-linear-gradient(180deg,#fff 0 1px,#b9b9b9 1px 2px)"></div><div class="a" style="left:199px;top:0px;width:1px;height:18px;background:repeating-linear-gradient(180deg,#fff 0 1px,#b9b9b9 1px 2px)"></div><div class="a" style="left:514px;top:0px;width:1px;height:18px;background:repeating-linear-gradient(180deg,#fff 0 1px,#b9b9b9 1px 2px)"></div><div class="a" style="left:844px;top:0px;width:1px;height:18px;background:repeating-linear-gradient(180deg,#fff 0 1px,#b9b9b9 1px 2px)"></div><div class="t" style="left:24px;top:3px;font-size:11.99px;color:#000;">26</div><div class="t" style="left:74px;top:3px;font-size:11.99px;color:#000;">VOUT6</div><div class="a" style="left:204px;top:3px;width:311px;height:15px;overflow:hidden"><div class="t" style="left:0px;top:0px;font-size:11.99px;color:#000;white-space:pre">ParamValue0='VOUT6',  MinExtern='-2147483648',  MinInter<span style="letter-spacing:-0.6px">...</span></div></div><div class="t" style="left:517px;top:3px;font-size:11.99px;color:#000;">Jetzt nicht importieren</div></div>
<div class="a" style="left:0;top:495px;width:852px;height:19px"><div class="a" style="left:9px;top:9px;width:10px;height:1px;border-top:1px dotted #8a8a8a"></div><div class="a" style="left:19px;top:0px;width:50px;height:19px;background:#e6e6e6;border-bottom:1px solid #c8c8c8;border-left:1px solid #cfcfcf"></div><div class="a" style="left:69px;top:0px;width:445px;height:18px;background:#90ee90"></div><div class="a" style="left:514px;top:0px;width:330px;height:18px;background:#ffff00"></div><div class="a" style="left:844px;top:0px;width:8px;height:18px;background:#fff"></div><div class="a" style="left:69px;top:18px;width:783px;height:1px;background:repeating-linear-gradient(90deg,#fff 0 1px,#b9b9b9 1px 2px)"></div><div class="a" style="left:69px;top:0px;width:1px;height:18px;background:repeating-linear-gradient(180deg,#fff 0 1px,#b9b9b9 1px 2px)"></div><div class="a" style="left:199px;top:0px;width:1px;height:18px;background:repeating-linear-gradient(180deg,#fff 0 1px,#b9b9b9 1px 2px)"></div><div class="a" style="left:514px;top:0px;width:1px;height:18px;background:repeating-linear-gradient(180deg,#fff 0 1px,#b9b9b9 1px 2px)"></div><div class="a" style="left:844px;top:0px;width:1px;height:18px;background:repeating-linear-gradient(180deg,#fff 0 1px,#b9b9b9 1px 2px)"></div><div class="t" style="left:24px;top:3px;font-size:11.99px;color:#000;">27</div><div class="t" style="left:74px;top:3px;font-size:11.99px;color:#000;">VOUT7</div><div class="a" style="left:204px;top:3px;width:311px;height:15px;overflow:hidden"><div class="t" style="left:0px;top:0px;font-size:11.99px;color:#000;white-space:pre">ParamValue0='VOUT7',  MinExtern='-2147483648',  MinInter<span style="letter-spacing:-0.6px">...</span></div></div><div class="t" style="left:517px;top:3px;font-size:11.99px;color:#000;">Jetzt nicht importieren</div></div>
</div>
<svg class="a" style="left:1076px;top:252px" width="9" height="7" viewBox="0 0 9 7"><path d="M1.2 5.2L4.5 1.8L7.8 5.2" fill="none" stroke="#555" stroke-width="2.1"/></svg>
<div class="a" style="left:1073px;top:263px;width:15px;height:401px;background:#cdcdcd"></div>
<svg class="a" style="left:1076px;top:781px" width="9" height="7" viewBox="0 0 9 7"><path d="M1.2 1.8L4.5 5.2L7.8 1.8" fill="none" stroke="#555" stroke-width="2.1"/></svg>
<svg class="a" style="left:225px;top:797px" width="7" height="9" viewBox="0 0 7 9"><path d="M5.2 1.2L1.8 4.5L5.2 7.8" fill="none" stroke="#555" stroke-width="2.1"/></svg>
<div class="a" style="left:237px;top:794px;width:673px;height:14px;background:#cdcdcd"></div>
<svg class="a" style="left:1060px;top:797px" width="7" height="9" viewBox="0 0 7 9"><path d="M1.8 1.2L5.2 4.5L1.8 7.8" fill="none" stroke="#555" stroke-width="2.1"/></svg>
<div class="a" style="left:220px;top:823px;width:13px;height:13px;background:#fff;border:1px solid #333"></div>
<svg class="a" style="left:222px;top:826px" width="9" height="8" viewBox="0 0 9 8"><path d="M0.8 3.8L3.3 6.5L8.3 1" fill="none" stroke="#333" stroke-width="1.5"/></svg>
<div class="t" style="left:237px;top:823px;font-size:11.99px;color:#000;">Identische anzeigen</div>
<div class="a" style="left:351px;top:823px;width:13px;height:13px;background:#fff;border:1px solid #333"></div>
<svg class="a" style="left:353px;top:826px" width="9" height="8" viewBox="0 0 9 8"><path d="M0.8 3.8L3.3 6.5L8.3 1" fill="none" stroke="#333" stroke-width="1.5"/></svg>
<div class="t" style="left:368px;top:823px;font-size:11.99px;color:#000;">Nicht identische anzeigen</div>
<div class="a" style="left:510px;top:823px;width:13px;height:13px;background:#fff;border:1px solid #333"></div>
<svg class="a" style="left:512px;top:826px" width="9" height="8" viewBox="0 0 9 8"><path d="M0.8 3.8L3.3 6.5L8.3 1" fill="none" stroke="#333" stroke-width="1.5"/></svg>
<div class="t" style="left:526px;top:823px;font-size:11.99px;color:#000;">Neue anzeigen</div>
<div class="a" style="left:617px;top:823px;width:13px;height:13px;background:#fff;border:1px solid #333"></div>
<svg class="a" style="left:619px;top:826px" width="9" height="8" viewBox="0 0 9 8"><path d="M0.8 3.8L3.3 6.5L8.3 1" fill="none" stroke="#333" stroke-width="1.5"/></svg>
<div class="t" style="left:634px;top:823px;font-size:11.99px;color:#000;">Gelöschte anzeigen</div>
<div class="a" style="left:950px;top:817px;width:138px;height:22px;background:#e1e1e1;border:1px solid #adadad"></div>
<div class="t" style="left:960px;top:822px;font-size:11.99px;color:#000;">Aktion-Spalte markieren</div>
<!-- RIGHT -->
<div class="t" style="left:1110px;top:153px;font-size:11.99px;color:#000;">Importeinstellungen</div>
<svg class="a" style="left:1593px;top:154px" width="8" height="11" viewBox="0 0 8 11"><rect x="1.5" y="1.5" width="5" height="5" fill="#fff" stroke="#2a2a2a"/><rect x="4" y="1" width="3" height="6" fill="#2a2a2a"/><rect x="0" y="6" width="7.5" height="1.2" fill="#2a2a2a"/><rect x="3" y="7" width="1.2" height="3.5" fill="#2a2a2a"/></svg>
<div class="a" style="left:1108px;top:167px;width:498px;height:2px;background:#ebf3fc"></div>
<div class="t" style="left:1117px;top:193px;font-size:11.99px;color:#000;">Treiber:</div>
<div class="a" style="left:1118px;top:208px;width:478px;height:21px;background:#fff;border:1px solid #abadb3"></div>
<div class="a" style="left:1577px;top:210px;width:17px;height:17px;background:#e6e6e6;border:1px solid #acacac"></div>
<svg class="a" style="left:1581px;top:216px" width="10" height="6" viewBox="0 0 10 6"><path d="M1 1L5 5L9 1" fill="none" stroke="#606060" stroke-width="1.2"/></svg>
<div class="t" style="left:1122px;top:213px;font-size:11.99px;color:#000;">UControlWeb</div>
<div class="a" style="left:1119px;top:236px;width:87px;height:21px;background:#e1e1e1;border:1px solid #adadad"></div>
<div class="t" style="left:1134px;top:241px;font-size:11.99px;color:#000;">Hinzufügen</div>
<div class="a" style="left:1214px;top:236px;width:87px;height:21px;background:#e1e1e1;border:1px solid #adadad"></div>
<div class="t" style="left:1237px;top:241px;font-size:11.99px;color:#000;">Löschen</div>
<div class="a" style="left:1118px;top:264px;width:478px;height:470px;background:#fff"></div>
<div class="a" style="left:1137px;top:264px;width:359px;height:24px;background:#e6e6e6;border-bottom:1px solid #d5d5d5"></div>
<div class="a" style="left:1156px;top:264px;width:1px;height:24px;background:#d2d2d2"></div>
<div class="a" style="left:1276px;top:264px;width:1px;height:24px;background:#d2d2d2"></div>
<div class="a" style="left:1396px;top:264px;width:1px;height:24px;background:#d2d2d2"></div>
<div class="a" style="left:1496px;top:264px;width:1px;height:24px;background:#d2d2d2"></div>
<div class="a" style="left:1137px;top:264px;width:1px;height:24px;background:#d8d8d8"></div>
<div class="t" style="left:1141px;top:269px;font-size:11.99px;color:#000;">A</div>
<div class="t" style="left:1161px;top:270px;font-size:11.99px;color:#000;">Projekt</div>
<div class="t" style="left:1281px;top:270px;font-size:11.99px;color:#000;">Pfad</div>
<div class="t" style="left:1401px;top:270px;font-size:11.99px;color:#000;">Prefix</div>
<div class="a" style="left:1137px;top:288px;width:360px;height:19px;border:1px dotted #b0b0b0;border-top:none"></div>
<div class="a" style="left:1156px;top:288px;width:1px;height:19px;border-left:1px dotted #b0b0b0"></div>
<div class="a" style="left:1276px;top:288px;width:1px;height:19px;border-left:1px dotted #b0b0b0"></div>
<div class="a" style="left:1396px;top:288px;width:1px;height:19px;border-left:1px dotted #b0b0b0"></div>
<div class="a" style="left:1138px;top:290px;width:13px;height:13px;background:#fff;border:1px solid #333"></div>
<svg class="a" style="left:1140px;top:293px" width="9" height="8" viewBox="0 0 9 8"><path d="M0.8 3.8L3.3 6.5L8.3 1" fill="none" stroke="#333" stroke-width="1.5"/></svg>
<div class="t" style="left:1161px;top:291px;font-size:11.99px;color:#6d6d6d;">172.16.100.1</div>
<div class="t" style="left:1281px;top:291px;font-size:11.99px;color:#6d6d6d;">172.16.100.1</div>
<div class="a" style="left:1118px;top:749px;width:13px;height:13px;background:#fff;border:1px solid #333"></div>
<div class="t" style="left:1137px;top:750px;font-size:11.99px;color:#000;">Vorhandene Prozessvariablen automatisch den SPS Symbolen zuweisen</div>
<div class="a" style="left:1119px;top:824px;width:476px;height:21px;background:#e1e1e1;border:1px solid #adadad"></div>
<div class="t" style="left:1313px;top:828px;font-size:11.99px;color:#000;">Symbole einlesen</div>
<!-- status -->
<div class="a" style="left:0;top:856px;width:1607px;height:23px;background:#2b579a"></div>
<!-- STATUS -->
<div class="a" style="left:0px;top:856px;width:1607px;height:1px;background:#27518e"></div>
<div class="t" style="left:4px;top:862px;font-size:11.99px;color:#fff;">Geöffnetes Projekt: Visu_showcase</div>
<svg class="a" style="left:943px;top:861px" width="18" height="13" viewBox="0 0 18 13"><path d="M0 4.5H5V1.5L10 6.5L5 11.5V8.5H0Z" fill="#fff"/><rect x="11" y="0" width="6" height="13" fill="#fff"/><rect x="12.5" y="9" width="1.3" height="2" fill="#2b579a"/><rect x="14.5" y="9" width="1.3" height="2" fill="#2b579a"/><rect x="12.5" y="2" width="1.3" height="2" fill="#2b579a"/></svg>
<div class="t" style="left:962px;top:862px;font-size:11.99px;color:#fff;">Kein Zielsystem</div>
<svg class="a" style="left:1106px;top:859px" width="16" height="16" viewBox="0 0 16 16"><rect x="2.5" y="0.5" width="11" height="11" fill="#fff" stroke="#999"/><path d="M4 2.5h3M9 2.5h3M4 4.5h3M9 4.5h3M4 6.5h3M9 6.5h3M4 8.5h3M9 8.5h3" stroke="#777"/><path d="M0 14.5h4M12 14.5h4" stroke="#3aa070" stroke-width="1.6"/><path d="M4 14.5h8" stroke="#999" stroke-width="1.6"/><rect x="7" y="11" width="2" height="3" fill="#3aa070"/></svg>
<svg class="a" style="left:1267px;top:859px" width="17" height="16" viewBox="0 0 17 16"><rect x="0.5" y="4" width="4" height="11" fill="#fff"/><rect x="6" y="0.5" width="4.5" height="14.5" fill="#fff"/><rect x="12" y="3" width="4" height="12" fill="#fff"/><path d="M1.5 12h2M7 12h2.5M13 12h2" stroke="#2b579a"/></svg>
<div class="t" style="left:1287px;top:862px;font-size:11.99px;color:#fff;">Keine Bibliothek</div>
<svg class="a" style="left:1429px;top:859px" width="18" height="16" viewBox="0 0 18 16"><path d="M5 0.5L10 5L5 9.5L0.5 5Z" fill="#fff"/><path d="M7 8L11 4L16 9L12 13Z" fill="#fff"/><path d="M9 10H16L13.5 12.5V16H11.5V12.5Z" fill="#fff" stroke="#2b579a" stroke-width="0.8"/></svg>
<div class="t" style="left:1448px;top:862px;font-size:11.99px;color:#fff;">Kein Filter</div>
<svg class="a" style="left:1595px;top:868px" width="10" height="10" viewBox="0 0 10 10"><rect x="8" y="0" width="2" height="2" fill="#8aa4cc"/><rect x="4" y="4" width="2" height="2" fill="#8aa4cc"/><rect x="8" y="4" width="2" height="2" fill="#8aa4cc"/><rect x="0" y="8" width="2" height="2" fill="#8aa4cc"/><rect x="4" y="8" width="2" height="2" fill="#8aa4cc"/><rect x="8" y="8" width="2" height="2" fill="#8aa4cc"/></svg>
<div id="win"></div>
</body></html>
